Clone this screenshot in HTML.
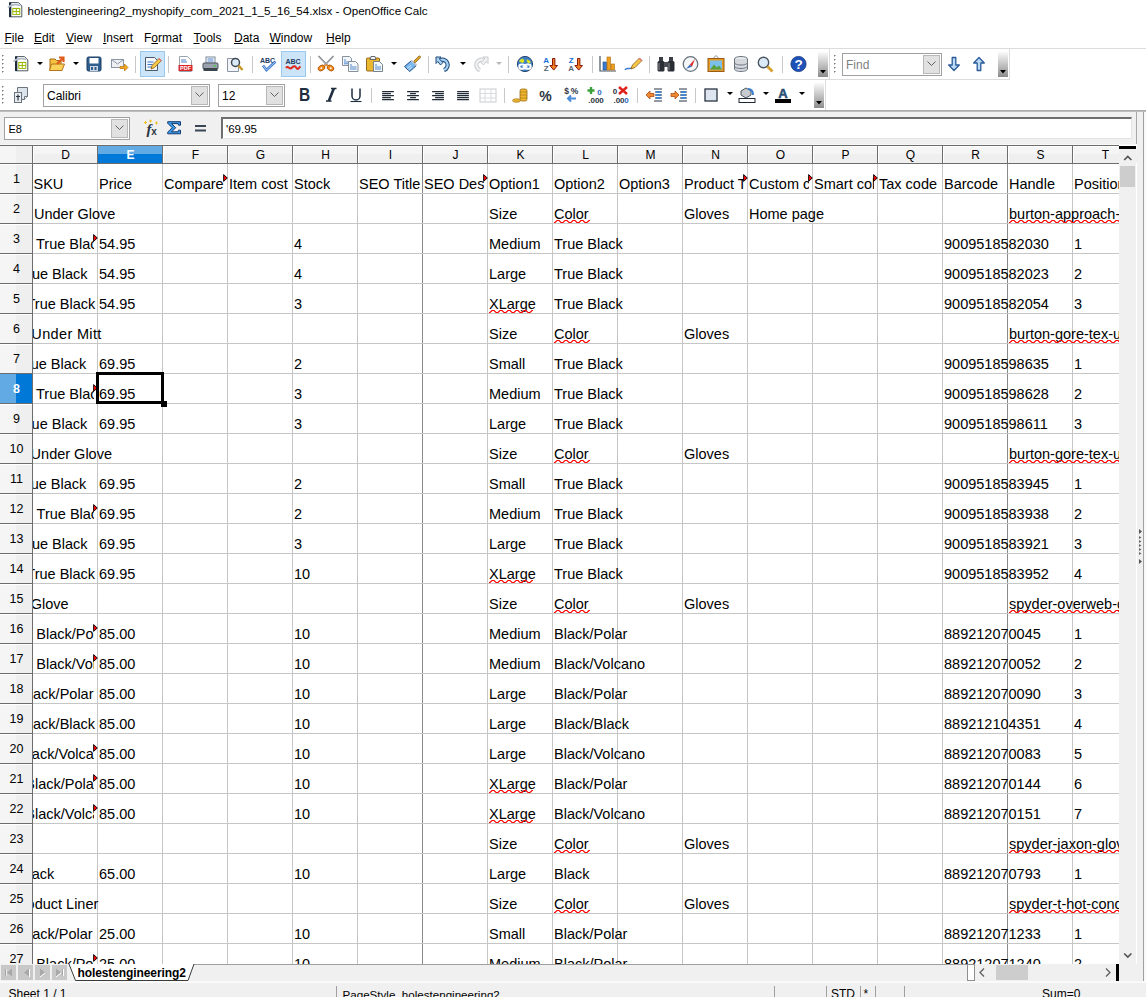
<!DOCTYPE html>
<html><head><meta charset="utf-8"><style>
html,body{margin:0;padding:0}
body{width:1146px;height:997px;overflow:hidden;position:relative;background:#fff;font-family:"Liberation Sans",sans-serif;color:#000}
.t{position:absolute;white-space:nowrap}
.r{position:absolute}
svg.r{overflow:visible}
u{text-decoration:underline;text-underline-offset:0.6px}
</style></head><body>
<svg class="r" style="left:8px;top:2px;" width="15" height="16" viewBox="0 0 15 16"><path d="M1.5 0.6H10.5L13.8 3.9V14.8H1.5Z" fill="#fff" stroke="#3c4650" stroke-width="0.9"/><rect x="1" y="0.5" width="2.3" height="14.5" fill="#1c2c3c"/><rect x="4.3" y="5.9" width="8" height="7" fill="#9ab800"/><path d="M5.3 6.9h2.5v2.2H5.3zM8.8 6.9h2.5v2.2H8.8zM5.3 10h2.5v2H5.3zM8.8 10h2.5v2H8.8z" fill="#fff"/><path d="M0 5.5C3 2.5 7.5 2 12.5 3.5" stroke="#b4bec8" stroke-width="1.7" fill="none"/></svg>
<div class="t " style="left:27.5px;top:5.18px;font-size:11.6px;line-height:11.6px;">holestengineering2_myshopify_com_2021_1_5_16_54.xlsx - OpenOffice Calc</div>
<div class="t " style="left:4.5px;top:31.84px;font-size:12px;line-height:12px;"><u>F</u>ile</div>
<div class="t " style="left:34px;top:31.84px;font-size:12px;line-height:12px;"><u>E</u>dit</div>
<div class="t " style="left:66px;top:31.84px;font-size:12px;line-height:12px;"><u>V</u>iew</div>
<div class="t " style="left:103px;top:31.84px;font-size:12px;line-height:12px;"><u>I</u>nsert</div>
<div class="t " style="left:144px;top:31.84px;font-size:12px;line-height:12px;">F<u>o</u>rmat</div>
<div class="t " style="left:193.5px;top:31.84px;font-size:12px;line-height:12px;"><u>T</u>ools</div>
<div class="t " style="left:234px;top:31.84px;font-size:12px;line-height:12px;"><u>D</u>ata</div>
<div class="t " style="left:269.5px;top:31.84px;font-size:12px;line-height:12px;"><u>W</u>indow</div>
<div class="t " style="left:326px;top:31.84px;font-size:12px;line-height:12px;"><u>H</u>elp</div>
<div class="r" style="left:0px;top:48px;width:1146px;height:1px;background:#dcdcdc"></div>
<div class="r" style="left:2px;top:55px;width:2px;height:2px;background:#7a7a7a;clip-path:polygon(0 0,100% 0,0 100%)"></div>
<div class="r" style="left:2px;top:59px;width:2px;height:2px;background:#7a7a7a;clip-path:polygon(0 0,100% 0,0 100%)"></div>
<div class="r" style="left:2px;top:63px;width:2px;height:2px;background:#7a7a7a;clip-path:polygon(0 0,100% 0,0 100%)"></div>
<div class="r" style="left:2px;top:67px;width:2px;height:2px;background:#7a7a7a;clip-path:polygon(0 0,100% 0,0 100%)"></div>
<div class="r" style="left:2px;top:71px;width:2px;height:2px;background:#7a7a7a;clip-path:polygon(0 0,100% 0,0 100%)"></div>
<svg class="r" style="left:13px;top:56px;" width="16" height="16" viewBox="0 0 16 16"><path d="M2.5 0.6H11.5L14.8 3.9V14.8H2.5Z" fill="#fff" stroke="#3c4650" stroke-width="0.9"/><rect x="2" y="0.5" width="2.3" height="14.5" fill="#1c2c3c"/><rect x="5.3" y="5.9" width="8" height="7" fill="#9ab800"/><path d="M6.3 6.9h2.5v2.2H6.3zM9.8 6.9h2.5v2.2H9.8zM6.3 10h2.5v2H6.3zM9.8 10h2.5v2H9.8z" fill="#fff"/><path d="M0.5 5.5C3.5 2.5 8.5 2 13.5 3.5" stroke="#b4bec8" stroke-width="1.7" fill="none"/></svg>
<svg class="r" style="left:37px;top:62px;" width="6" height="4" viewBox="0 0 6 4"><path d="M0 0h6L3 3z" fill="#000"/></svg>
<svg class="r" style="left:49px;top:56px;" width="17" height="16" viewBox="0 0 17 16"><path d="M1 3h5l1.5 1.5H12V14H1z" fill="#f5c342" stroke="#a86a10" stroke-width="1"/><path d="M2.5 8h13L13 14.5H0.5z" fill="#fbd25a" stroke="#b5731a" stroke-width="1"/><path d="M8 8l6-6M10 1.5h4.5V6" stroke="#e05a1c" stroke-width="2.2" fill="none"/></svg>
<svg class="r" style="left:73px;top:62px;" width="6" height="4" viewBox="0 0 6 4"><path d="M0 0h6L3 3z" fill="#000"/></svg>
<svg class="r" style="left:86px;top:56px;" width="16" height="16" viewBox="0 0 16 16"><rect x="1" y="1" width="14" height="14" rx="1.5" fill="#2f5f8f" stroke="#1b3f63"/><rect x="3.5" y="2" width="9" height="5.5" fill="#fff"/><rect x="4" y="10" width="8" height="5" fill="#cfd8e2"/><rect x="5" y="11" width="2" height="3" fill="#2f5f8f"/><rect x="8.5" y="11" width="2" height="3" fill="#2f5f8f"/></svg>
<svg class="r" style="left:111px;top:58px;" width="17" height="13" viewBox="0 0 17 13"><rect x="0.5" y="1.5" width="12" height="8" fill="#eef0f3" stroke="#8a96a4"/><path d="M0.5 1.5l6 4.5 6-4.5" stroke="#8a96a4" fill="none"/><path d="M9 8.5h4.5V6l3.5 3.5-3.5 3.5v-2.5H9z" fill="#f3a81e" stroke="#c07a10" stroke-width="0.8"/></svg>
<div class="r" style="left:135px;top:56px;width:1px;height:17px;background:#c8c8c8"></div>
<div class="r" style="left:140px;top:51px;width:25px;height:26px;background:#cce4f7;box-sizing:border-box;border:1px solid #99c9ef"></div>
<svg class="r" style="left:144px;top:56px;" width="17" height="16" viewBox="0 0 17 16"><path d="M1.5 1.5h9l3 3v10h-12z" fill="#f3f6fa" stroke="#4a5a6a"/><path d="M3.5 6h6M3.5 8.5h5M3.5 11h4" stroke="#3a76c4" stroke-width="1"/><path d="M7 13l1-3.5 7-7 2.3 2.3-7 7z" fill="#f5c84a" stroke="#8a5a10" stroke-width="0.8"/><path d="M14.5 2.8l2.3 2.3 0.8-0.8-2.3-2.3z" fill="#e86a8a"/></svg>
<div class="r" style="left:168px;top:56px;width:1px;height:17px;background:#c8c8c8"></div>
<svg class="r" style="left:178px;top:56px;" width="15" height="16" viewBox="0 0 15 16"><path d="M1.5 0.5h8l4 4v11h-12z" fill="#fff" stroke="#9aa4ae"/><path d="M3 4h5M3 6h6" stroke="#4a80c8"/><rect x="0.5" y="9" width="14" height="6" fill="#d8262a"/><text x="7.5" y="14.2" font-size="5.5" font-family="Liberation Sans" font-weight="bold" fill="#fff" text-anchor="middle">PDF</text></svg>
<svg class="r" style="left:202px;top:56px;" width="17" height="16" viewBox="0 0 17 16"><rect x="4" y="1" width="9" height="6" fill="#fff" stroke="#7a8694"/><path d="M5.5 3h6M5.5 5h6" stroke="#4a80c8"/><rect x="1" y="7" width="15" height="6" rx="1" fill="#9aa3ad" stroke="#4c5560"/><rect x="1.5" y="12" width="14" height="3" fill="#3c444c"/><rect x="12" y="9" width="2" height="1.5" fill="#4ec24e"/></svg>
<svg class="r" style="left:226px;top:56px;" width="17" height="16" viewBox="0 0 17 16"><path d="M1.5 2.5h8l3 3v10h-11z" fill="#f2f4f7" stroke="#8a96a4"/><circle cx="9.5" cy="6.5" r="4" fill="#dbe9f7" stroke="#3c4652" stroke-width="1.5"/><path d="M12.5 9.5l4 4.5" stroke="#c8962a" stroke-width="2.5"/></svg>
<div class="r" style="left:252px;top:56px;width:1px;height:17px;background:#c8c8c8"></div>
<svg class="r" style="left:259px;top:56px;" width="18" height="16" viewBox="0 0 18 16"><text x="8.5" y="6.5" font-size="7" font-family="Liberation Sans" font-weight="bold" fill="#1e3c64" text-anchor="middle">ABC</text><path d="M4 9.5l3.5 4.5 9-8.5" stroke="#3a7ad0" stroke-width="2.6" fill="none"/><path d="M4 9.5l3.5 4.5 9-8.5" stroke="#bcd6f2" stroke-width="0.9" fill="none"/></svg>
<div class="r" style="left:281px;top:51px;width:25px;height:26px;background:#cce4f7;box-sizing:border-box;border:1px solid #99c9ef"></div>
<svg class="r" style="left:284px;top:56px;" width="18" height="16" viewBox="0 0 18 16"><text x="9" y="8" font-size="7" font-family="Liberation Sans" font-weight="bold" fill="#1e3c64" text-anchor="middle">ABC</text><path d="M2 12c2-3 3.5 2 5.5 0s3.5-2.5 5 0 3-1 4-1.5" stroke="#e0261a" stroke-width="2" fill="none"/></svg>
<div class="r" style="left:310px;top:56px;width:1px;height:17px;background:#c8c8c8"></div>
<svg class="r" style="left:317px;top:55px;" width="18" height="17" viewBox="0 0 18 17"><path d="M1.5 1l9 9.5M16.5 1l-9 9.5" stroke="#6a7078" stroke-width="1.5"/><path d="M1.5 1l9 9.5M16.5 1l-9 9.5" stroke="#e0e4e8" stroke-width="0.5"/><ellipse cx="4.5" cy="13" rx="3.6" ry="2.6" transform="rotate(-30 4.5 13)" fill="#f08a1a" stroke="#a85008" stroke-width="0.8"/><ellipse cx="13.5" cy="13" rx="3.6" ry="2.6" transform="rotate(30 13.5 13)" fill="#f08a1a" stroke="#a85008" stroke-width="0.8"/><circle cx="4.3" cy="13.2" r="0.9" fill="#fff"/><circle cx="13.7" cy="13.2" r="0.9" fill="#fff"/><path d="M7.5 10.5l3 -0.5" stroke="#f08a1a" stroke-width="1.5"/></svg>
<svg class="r" style="left:342px;top:56px;" width="17" height="16" viewBox="0 0 17 16"><path d="M0.5 0.5h7l2 2v7h-9z" fill="#f4f7fa" stroke="#7a8490" stroke-width="0.9"/><path d="M2 4h2M2 6h5.5M2 7.8h5.5" stroke="#2a70c0" stroke-width="0.8"/><path d="M6.5 5.5h7l2.5 2.5v7.5h-9.5z" fill="#f4f7fa" stroke="#7a8490" stroke-width="0.9"/><path d="M8 9h2M8 11h6.5M8 13h6.5" stroke="#2a70c0" stroke-width="0.8"/></svg>
<svg class="r" style="left:366px;top:55px;" width="18" height="17" viewBox="0 0 18 17"><rect x="0.5" y="3" width="13" height="13" rx="1" fill="#eab830" stroke="#8a5a10" stroke-width="0.9"/><path d="M4 4.5l1-3h4l1 3z" fill="#f4f4f4" stroke="#505860" stroke-width="0.9"/><path d="M7.5 6.5h6l3 3v7h-9z" fill="#f4f7fa" stroke="#6a7684" stroke-width="0.9"/><path d="M9 10h2M9 12h6M9 14h6" stroke="#2a70c0" stroke-width="0.8"/></svg>
<svg class="r" style="left:391px;top:62px;" width="6" height="4" viewBox="0 0 6 4"><path d="M0 0h6L3 3z" fill="#000"/></svg>
<svg class="r" style="left:403px;top:55px;" width="18" height="17" viewBox="0 0 18 17"><path d="M1.5 11.5L8 6l5 4.8-6.3 5.7z" fill="#7ab8f0" stroke="#1e4a8a" stroke-width="1" stroke-linejoin="round"/><path d="M4 13.5l4-3.3M5.5 15l3.5-3" stroke="#d8ecfc" stroke-width="0.8"/><path d="M8.3 5.2l5.5 5" stroke="#f4f4f4" stroke-width="2.2"/><path d="M8.3 5.2l5.5 5" stroke="#3a4a5a" stroke-width="0.5" stroke-dasharray="0"/><path d="M12 6.5l4.5-4.5" stroke="#8a5a10" stroke-width="2.6" stroke-linecap="round"/><path d="M12 6.5l4.5-4.5" stroke="#e8b030" stroke-width="1.4" stroke-linecap="round"/></svg>
<div class="r" style="left:428px;top:56px;width:1px;height:17px;background:#c8c8c8"></div>
<svg class="r" style="left:435px;top:56px;" width="18" height="16" viewBox="0 0 18 16"><path d="M4.5 4.5A5.3 5.3 0 1 1 9 14" fill="none" stroke="#1e4a7a" stroke-width="4.2"/><path d="M4.5 4.5A5.3 5.3 0 1 1 9 14" fill="none" stroke="#a8d0f0" stroke-width="2.2"/><path d="M1 1H6L4.3 3 8 6.5 5.5 9 2.8 5.5 1 7.5z" fill="#a8d0f0" stroke="#1e4a7a" stroke-width="1" stroke-linejoin="round"/></svg>
<svg class="r" style="left:460px;top:62px;" width="6" height="4" viewBox="0 0 6 4"><path d="M0 0h6L3 3z" fill="#000"/></svg>
<svg class="r" style="left:471px;top:56px;" width="18" height="16" viewBox="0 0 18 16"><g transform="translate(18 0) scale(-1 1)"><path d="M4.5 4.5A5.3 5.3 0 1 1 9 14" fill="none" stroke="#c8cacc" stroke-width="4.2"/><path d="M4.5 4.5A5.3 5.3 0 1 1 9 14" fill="none" stroke="#f0f2f4" stroke-width="2.2"/><path d="M1 1H6L4.3 3 8 6.5 5.5 9 2.8 5.5 1 7.5z" fill="#f0f2f4" stroke="#c8cacc" stroke-width="1" stroke-linejoin="round"/></g></svg>
<svg class="r" style="left:496px;top:62px;" width="6" height="4" viewBox="0 0 6 4"><path d="M0 0h6L3 3z" fill="#b8b8b8"/></svg>
<div class="r" style="left:508px;top:56px;width:1px;height:17px;background:#c8c8c8"></div>
<svg class="r" style="left:516px;top:56px;" width="18" height="16" viewBox="0 0 18 16"><circle cx="9" cy="8" r="7.6" fill="#3d7fc4" stroke="#1a3560" stroke-width="0.9"/><path d="M3 5.5c1-2.5 3-3.2 4.5-2.5l1 2.5-2 1.5zM10.5 3.5c2 0 3.5 1 4.5 3l-2.5 1-1.5-1.5z" fill="#d8e020"/><rect x="3.3" y="8.6" width="5.6" height="4.2" rx="2.1" fill="none" stroke="#fff" stroke-width="2"/><rect x="9.1" y="8.6" width="5.6" height="4.2" rx="2.1" fill="none" stroke="#fff" stroke-width="2"/><path d="M6.5 10.7h5" stroke="#fff" stroke-width="1.5"/></svg>
<svg class="r" style="left:542px;top:55px;" width="16" height="17" viewBox="0 0 16 17"><text x="4.2" y="7.5" font-size="8" font-family="Liberation Sans" font-weight="bold" fill="#1a70d8" text-anchor="middle">A</text><text x="4.2" y="16" font-size="8" font-family="Liberation Sans" font-weight="bold" fill="#5a6470" text-anchor="middle">Z</text><path d="M10.5 3.5h2.4v7h2.6l-3.8 4.6-3.8-4.6h2.6z" fill="#f08020" stroke="#8a1a08" stroke-width="1" stroke-linejoin="round"/></svg>
<svg class="r" style="left:567px;top:55px;" width="16" height="17" viewBox="0 0 16 17"><text x="4.2" y="7.5" font-size="8" font-family="Liberation Sans" font-weight="bold" fill="#1a70d8" text-anchor="middle">Z</text><text x="4.2" y="16" font-size="8" font-family="Liberation Sans" font-weight="bold" fill="#5a6470" text-anchor="middle">A</text><path d="M10.5 3.5h2.4v7h2.6l-3.8 4.6-3.8-4.6h2.6z" fill="#f08020" stroke="#8a1a08" stroke-width="1" stroke-linejoin="round"/></svg>
<div class="r" style="left:592px;top:56px;width:1px;height:17px;background:#c8c8c8"></div>
<svg class="r" style="left:599px;top:55px;" width="18" height="17" viewBox="0 0 18 17"><path d="M1 1v15h16" fill="none" stroke="#4a5460" stroke-width="1.2"/><rect x="4" y="7" width="3.5" height="8" fill="#3a7ad0" stroke="#1e4a8a" stroke-width="0.6"/><rect x="8" y="2" width="3.5" height="13" fill="#f0a020" stroke="#a86a10" stroke-width="0.6"/><rect x="12" y="9" width="3.5" height="6" fill="#f0a020" stroke="#a86a10" stroke-width="0.6"/></svg>
<svg class="r" style="left:624px;top:56px;" width="18" height="16" viewBox="0 0 18 16"><path d="M1 14c2-4 5 1 7-3" stroke="#3a7ad0" stroke-width="1.5" fill="none"/><path d="M7 13l1.5-4 7-7 2.5 2.5-7 7z" fill="#f5c84a" stroke="#8a5a10" stroke-width="0.8"/><path d="M14.8 2.8l2.5 2.5 0.7-0.8-2.4-2.4z" fill="#e86a8a"/></svg>
<div class="r" style="left:649px;top:56px;width:1px;height:17px;background:#c8c8c8"></div>
<svg class="r" style="left:657px;top:56px;" width="18" height="16" viewBox="0 0 18 16"><rect x="2" y="1" width="4" height="5" fill="#3a3e44"/><rect x="12" y="1" width="4" height="5" fill="#3a3e44"/><rect x="0.5" y="5" width="7" height="10.5" rx="1.5" fill="#2a2e34"/><rect x="10.5" y="5" width="7" height="10.5" rx="1.5" fill="#2a2e34"/><rect x="7" y="6" width="4" height="5" fill="#4a4e54"/><path d="M2 7v7M12 7v7" stroke="#8a9098" stroke-width="1"/></svg>
<svg class="r" style="left:682px;top:56px;" width="17" height="16" viewBox="0 0 17 16"><circle cx="8.5" cy="8" r="7.3" fill="#f4f6f8" stroke="#6a747e" stroke-width="1.3"/><path d="M13 3L7.5 9 10 10.5z" fill="#e02a2a"/><path d="M4 13l3.5-4 2.5 1.5z" fill="#2a6ac4"/></svg>
<svg class="r" style="left:707px;top:55px;" width="18" height="17" viewBox="0 0 18 17"><path d="M6 3.5l3-3 3 3" fill="none" stroke="#6a7480" stroke-width="0.8"/><rect x="1" y="3.5" width="16" height="13" fill="#e49a2a" stroke="#9a5a10"/><rect x="3" y="5.5" width="12" height="9" fill="#7ac0e8"/><path d="M3 14.5l4-5 3 3 2-2 3 4z" fill="#5aa03a"/></svg>
<svg class="r" style="left:733px;top:56px;" width="16" height="16" viewBox="0 0 16 16"><ellipse cx="8" cy="3" rx="6.5" ry="2.5" fill="#e8ebee" stroke="#6a747e"/><path d="M1.5 3v10c0 1.5 3 2.5 6.5 2.5s6.5-1 6.5-2.5V3" fill="#d4d8dc" stroke="#6a747e"/><path d="M1.5 6.5c0 1.5 3 2.5 6.5 2.5s6.5-1 6.5-2.5M1.5 10c0 1.5 3 2.5 6.5 2.5s6.5-1 6.5-2.5" fill="none" stroke="#6a747e"/></svg>
<svg class="r" style="left:757px;top:56px;" width="17" height="16" viewBox="0 0 17 16"><circle cx="6.5" cy="6.5" r="5.2" fill="#dbeaf7" stroke="#4a5460" stroke-width="1.4"/><path d="M10.5 10.5l5 5" stroke="#d8a030" stroke-width="2.8"/></svg>
<div class="r" style="left:782px;top:56px;width:1px;height:17px;background:#c8c8c8"></div>
<svg class="r" style="left:790px;top:56px;" width="17" height="16" viewBox="0 0 17 16"><circle cx="8.5" cy="8" r="7.6" fill="#1f52b8" stroke="#12337a" stroke-width="0.8"/><text x="8.5" y="13" font-size="13.5" font-family="Liberation Sans" font-weight="bold" fill="#fff" text-anchor="middle">?</text></svg>
<div class="r" style="left:818px;top:52px;width:10px;height:25px;background:linear-gradient(#fafafa,#8c8c8c)"></div>
<svg class="r" style="left:820px;top:70px;" width="6" height="4" viewBox="0 0 6 4"><path d="M0 0h6L3 3.5z" fill="#000"/></svg>
<div class="r" style="left:829px;top:49px;width:1px;height:31px;background:#dcdcdc"></div>
<div class="r" style="left:0px;top:79px;width:830px;height:1px;background:#dcdcdc"></div>
<div class="r" style="left:834px;top:55px;width:2px;height:2px;background:#7a7a7a;clip-path:polygon(0 0,100% 0,0 100%)"></div>
<div class="r" style="left:834px;top:59px;width:2px;height:2px;background:#7a7a7a;clip-path:polygon(0 0,100% 0,0 100%)"></div>
<div class="r" style="left:834px;top:63px;width:2px;height:2px;background:#7a7a7a;clip-path:polygon(0 0,100% 0,0 100%)"></div>
<div class="r" style="left:834px;top:67px;width:2px;height:2px;background:#7a7a7a;clip-path:polygon(0 0,100% 0,0 100%)"></div>
<div class="r" style="left:834px;top:71px;width:2px;height:2px;background:#7a7a7a;clip-path:polygon(0 0,100% 0,0 100%)"></div>
<div class="r" style="left:842px;top:53px;width:100px;height:23px;box-sizing:border-box;border:1px solid #a0a0a0;background:#fff"></div>
<div class="r" style="left:923px;top:55px;width:17px;height:19px;box-sizing:border-box;border:1px solid #b8b8b8;background:#e1e1e1"></div>
<svg class="r" style="left:927px;top:61px;" width="9" height="6" viewBox="0 0 9 6"><path d="M0.5 0.5l4 4 4-4" fill="none" stroke="#606060" stroke-width="1"/></svg>
<div class="t " style="left:846px;top:59.34px;font-size:12px;line-height:12px;color:#808080">Find</div>
<svg class="r" style="left:947px;top:56px;" width="14" height="16" viewBox="0 0 14 16"><path d="M5.2 1.5h3.6v7.5h3.5L7 14.5 1.7 9h3.5z" fill="#bcdcf6" stroke="#2a5a9a" stroke-width="1.3" stroke-linejoin="round"/></svg>
<svg class="r" style="left:972px;top:56px;" width="14" height="16" viewBox="0 0 14 16"><path d="M5.2 14.5h3.6V7h3.5L7 1.5 1.7 7h3.5z" fill="#bcdcf6" stroke="#2a5a9a" stroke-width="1.3" stroke-linejoin="round"/></svg>
<div class="r" style="left:998px;top:52px;width:10px;height:25px;background:linear-gradient(#fafafa,#8c8c8c)"></div>
<svg class="r" style="left:1000px;top:70px;" width="6" height="4" viewBox="0 0 6 4"><path d="M0 0h6L3 3.5z" fill="#000"/></svg>
<div class="r" style="left:1009px;top:49px;width:1px;height:31px;background:#dcdcdc"></div>
<div class="r" style="left:830px;top:79px;width:180px;height:1px;background:#dcdcdc"></div>
<div class="r" style="left:2px;top:86px;width:2px;height:2px;background:#7a7a7a;clip-path:polygon(0 0,100% 0,0 100%)"></div>
<div class="r" style="left:2px;top:90px;width:2px;height:2px;background:#7a7a7a;clip-path:polygon(0 0,100% 0,0 100%)"></div>
<div class="r" style="left:2px;top:94px;width:2px;height:2px;background:#7a7a7a;clip-path:polygon(0 0,100% 0,0 100%)"></div>
<div class="r" style="left:2px;top:98px;width:2px;height:2px;background:#7a7a7a;clip-path:polygon(0 0,100% 0,0 100%)"></div>
<div class="r" style="left:2px;top:102px;width:2px;height:2px;background:#7a7a7a;clip-path:polygon(0 0,100% 0,0 100%)"></div>
<svg class="r" style="left:13px;top:86px;" width="18" height="17" viewBox="0 0 18 17"><path d="M4.5 1.5h10v9l-3 3h-7z" fill="#dde3ea" stroke="#6a747e"/><path d="M11.5 13.5v-3h3" fill="#fff" stroke="#6a747e"/><rect x="1.5" y="6.5" width="7" height="10" fill="#e8ecf0" stroke="#6a747e"/><path d="M5 8.5v6M3 10.5h4" stroke="#2a3440" stroke-width="1.2"/></svg>
<div class="r" style="left:43px;top:84px;width:167px;height:23px;box-sizing:border-box;border:1px solid #a0a0a0;background:#fff"></div>
<div class="r" style="left:191px;top:86px;width:17px;height:19px;box-sizing:border-box;border:1px solid #b8b8b8;background:#e1e1e1"></div>
<svg class="r" style="left:195px;top:92px;" width="9" height="6" viewBox="0 0 9 6"><path d="M0.5 0.5l4 4 4-4" fill="none" stroke="#606060" stroke-width="1"/></svg>
<div class="t " style="left:47px;top:89.84px;font-size:12px;line-height:12px;">Calibri</div>
<div class="r" style="left:218px;top:84px;width:67px;height:23px;box-sizing:border-box;border:1px solid #a0a0a0;background:#fff"></div>
<div class="r" style="left:266px;top:86px;width:17px;height:19px;box-sizing:border-box;border:1px solid #b8b8b8;background:#e1e1e1"></div>
<svg class="r" style="left:270px;top:92px;" width="9" height="6" viewBox="0 0 9 6"><path d="M0.5 0.5l4 4 4-4" fill="none" stroke="#606060" stroke-width="1"/></svg>
<div class="t " style="left:222px;top:89.84px;font-size:12px;line-height:12px;">12</div>
<svg class="r" style="left:299px;top:87px;" width="14" height="16" viewBox="0 0 14 16"><text x="0" y="14" font-size="18" font-family="Liberation Sans" font-weight="bold" fill="#1e2e3e" transform="scale(0.86 1)">B</text></svg>
<svg class="r" style="left:324px;top:87px;" width="13" height="16" viewBox="0 0 13 16"><path d="M7 1.5h5.5M2 14h5.5" stroke="#1e2e3e" stroke-width="1.4"/><path d="M9.8 1.5L4.8 14" stroke="#1e2e3e" stroke-width="2.6"/></svg>
<svg class="r" style="left:349px;top:87px;" width="14" height="16" viewBox="0 0 14 16"><path d="M3 1.5v7.5a4 4 0 0 0 8 0V1.5" fill="none" stroke="#1e2e3e" stroke-width="1.5"/><path d="M1.5 14.5h11" stroke="#1e2e3e" stroke-width="1.1"/></svg>
<div class="r" style="left:371px;top:88px;width:1px;height:15px;background:#c8c8c8"></div>
<svg class="r" style="left:382px;top:90px;" width="13" height="11" viewBox="0 0 13 11"><rect x="0" y="1.0" width="12" height="1.25" rx="0.5" fill="#232c36"/><rect x="0" y="3.0" width="9" height="1.25" rx="0.5" fill="#232c36"/><rect x="0" y="5.0" width="12" height="1.25" rx="0.5" fill="#232c36"/><rect x="0" y="7.0" width="9" height="1.25" rx="0.5" fill="#232c36"/><rect x="0" y="9.0" width="12" height="1.25" rx="0.5" fill="#232c36"/></svg>
<svg class="r" style="left:407px;top:90px;" width="13" height="11" viewBox="0 0 13 11"><rect x="0" y="1.0" width="12" height="1.25" rx="0.5" fill="#232c36"/><rect x="3" y="3.0" width="6" height="1.25" rx="0.5" fill="#232c36"/><rect x="0" y="5.0" width="12" height="1.25" rx="0.5" fill="#232c36"/><rect x="3" y="7.0" width="6" height="1.25" rx="0.5" fill="#232c36"/><rect x="0" y="9.0" width="12" height="1.25" rx="0.5" fill="#232c36"/></svg>
<svg class="r" style="left:432px;top:90px;" width="13" height="11" viewBox="0 0 13 11"><rect x="0" y="1.0" width="12" height="1.25" rx="0.5" fill="#232c36"/><rect x="3" y="3.0" width="9" height="1.25" rx="0.5" fill="#232c36"/><rect x="0" y="5.0" width="12" height="1.25" rx="0.5" fill="#232c36"/><rect x="3" y="7.0" width="9" height="1.25" rx="0.5" fill="#232c36"/><rect x="0" y="9.0" width="12" height="1.25" rx="0.5" fill="#232c36"/></svg>
<svg class="r" style="left:457px;top:90px;" width="13" height="11" viewBox="0 0 13 11"><rect x="0" y="1.0" width="12" height="1.25" rx="0.5" fill="#232c36"/><rect x="0" y="3.0" width="12" height="1.25" rx="0.5" fill="#232c36"/><rect x="0" y="5.0" width="12" height="1.25" rx="0.5" fill="#232c36"/><rect x="0" y="7.0" width="12" height="1.25" rx="0.5" fill="#232c36"/><rect x="0" y="9.0" width="12" height="1.25" rx="0.5" fill="#232c36"/></svg>
<svg class="r" style="left:479px;top:88px;" width="18" height="16" viewBox="0 0 18 16"><rect x="1" y="1" width="16" height="13" fill="#fff" stroke="#c8ccd0"/><path d="M1 5.5h16M1 10h16M6 1v13M12 1v13" stroke="#d8dcdf"/></svg>
<div class="r" style="left:504px;top:88px;width:1px;height:15px;background:#c8c8c8"></div>
<svg class="r" style="left:512px;top:86px;" width="18" height="17" viewBox="0 0 18 17"><ellipse cx="4.5" cy="14.5" rx="4" ry="1.8" fill="#e8b030" stroke="#9a6a10" stroke-width="0.6"/><rect x="8" y="3" width="7" height="12" rx="2" fill="#f0b830" stroke="#9a6a10" stroke-width="0.8"/><path d="M8 6h7M8 9h7M8 12h7" stroke="#9a6a10" stroke-width="0.6"/></svg>
<svg class="r" style="left:539px;top:88px;" width="13" height="14" viewBox="0 0 13 14"><text x="6.5" y="12.5" font-size="14" font-family="Liberation Sans" font-weight="bold" fill="#2a3440" text-anchor="middle">%</text></svg>
<svg class="r" style="left:562px;top:86px;" width="18" height="17" viewBox="0 0 18 17"><text x="4.5" y="8" font-size="8.5" font-family="Liberation Sans" font-weight="bold" fill="#2a3440" text-anchor="middle">$</text><text x="12.5" y="8" font-size="8.5" font-family="Liberation Sans" font-weight="bold" fill="#2a3440" text-anchor="middle">%</text><path d="M14 12.5H6M9 9.5l-3 3 3 3" fill="none" stroke="#4a8ad8" stroke-width="2"/></svg>
<svg class="r" style="left:587px;top:86px;" width="18" height="17" viewBox="0 0 18 17"><path d="M4 1v7M0.5 4.5h7" stroke="#3aa03a" stroke-width="2.4"/><text x="12.5" y="9" font-size="8" font-family="Liberation Sans" font-weight="bold" fill="#2a6ac4" text-anchor="middle">0</text><text x="9" y="16.5" font-size="8" font-family="Liberation Sans" font-weight="bold" fill="#2a3440" text-anchor="middle">.000</text></svg>
<svg class="r" style="left:612px;top:86px;" width="18" height="17" viewBox="0 0 18 17"><text x="3" y="8" font-size="8" font-family="Liberation Sans" font-weight="bold" fill="#2a3440" text-anchor="middle">0</text><path d="M7 1l8 7M15 1l-8 7" stroke="#e0201a" stroke-width="2.4"/><text x="7" y="16.5" font-size="8" font-family="Liberation Sans" font-weight="bold" fill="#2a3440" text-anchor="middle">.00</text><text x="14.5" y="16.5" font-size="8" font-family="Liberation Sans" font-weight="bold" fill="#2a6ac4" text-anchor="middle">0</text></svg>
<div class="r" style="left:637px;top:88px;width:1px;height:15px;background:#c8c8c8"></div>
<svg class="r" style="left:645px;top:87px;" width="18" height="16" viewBox="0 0 18 16"><path d="M9 2h8M9 14h8M10 5h7M10 8h7M10 11h7" stroke="#2a3440" stroke-width="1"/><path d="M11 5h5M11 8h5M11 11h5" stroke="#2a80d8" stroke-width="1.6"/><path d="M1 8l4-4v2.5h4v3H5V12z" fill="#f08a30" stroke="#b04a10" stroke-width="0.8"/></svg>
<svg class="r" style="left:670px;top:87px;" width="18" height="16" viewBox="0 0 18 16"><path d="M9 2h8M9 14h8M10 5h7M10 8h7M10 11h7" stroke="#2a3440" stroke-width="1"/><path d="M11 5h5M11 8h5M11 11h5" stroke="#2a80d8" stroke-width="1.6"/><path d="M9 8L5 4v2.5H1v3h4V12z" fill="#f08a30" stroke="#b04a10" stroke-width="0.8"/></svg>
<div class="r" style="left:695px;top:88px;width:1px;height:15px;background:#c8c8c8"></div>
<svg class="r" style="left:704px;top:88px;" width="14" height="14" viewBox="0 0 14 14"><rect x="1" y="1" width="12" height="12" fill="#dde6f0" stroke="#2a3440" stroke-width="1.3"/></svg>
<svg class="r" style="left:727px;top:92px;" width="6" height="4" viewBox="0 0 6 4"><path d="M0 0h6L3 3z" fill="#000"/></svg>
<svg class="r" style="left:738px;top:86px;" width="18" height="17" viewBox="0 0 18 17"><path d="M3 5l5-3 5 3v4l-5 3-5-3z" fill="#c8ccd0" stroke="#4a5460"/><path d="M10 3c3 0 5 2 5 6" stroke="#3a80d0" stroke-width="2" fill="none"/><rect x="1" y="12.5" width="16" height="4" fill="#fff" stroke="#1e2a36"/></svg>
<svg class="r" style="left:763px;top:92px;" width="6" height="4" viewBox="0 0 6 4"><path d="M0 0h6L3 3z" fill="#000"/></svg>
<svg class="r" style="left:774px;top:86px;" width="18" height="17" viewBox="0 0 18 17"><text x="9" y="12" font-size="13" font-family="Liberation Sans" font-weight="bold" fill="#2a5a8a" stroke="#1e3a5a" stroke-width="0.5" text-anchor="middle">A</text><rect x="1" y="13" width="16" height="4" fill="#000"/></svg>
<svg class="r" style="left:799px;top:92px;" width="6" height="4" viewBox="0 0 6 4"><path d="M0 0h6L3 3z" fill="#000"/></svg>
<div class="r" style="left:814px;top:83px;width:10px;height:25px;background:linear-gradient(#fafafa,#8c8c8c)"></div>
<svg class="r" style="left:816px;top:101px;" width="6" height="4" viewBox="0 0 6 4"><path d="M0 0h6L3 3.5z" fill="#000"/></svg>
<div class="r" style="left:825px;top:80px;width:1px;height:30px;background:#dcdcdc"></div>
<div class="r" style="left:0px;top:110px;width:1146px;height:2px;background:linear-gradient(#a0a0a0,#c8c8c8)"></div>
<div class="r" style="left:0px;top:112px;width:1137px;height:32px;background:#f0f0f0"></div>
<div class="r" style="left:1136px;top:112px;width:1px;height:33px;background:#a8a8a8"></div>
<div class="r" style="left:4px;top:117px;width:126px;height:23px;box-sizing:border-box;border:1px solid #a0a0a0;background:#fff"></div>
<div class="r" style="left:111px;top:119px;width:17px;height:19px;box-sizing:border-box;border:1px solid #b8b8b8;background:#e1e1e1"></div>
<svg class="r" style="left:115px;top:125px;" width="9" height="6" viewBox="0 0 9 6"><path d="M0.5 0.5l4 4 4-4" fill="none" stroke="#606060" stroke-width="1"/></svg>
<div class="t " style="left:8.5px;top:124.19px;font-size:11px;line-height:11px;">E8</div>
<svg class="r" style="left:141px;top:119px;" width="18" height="17" viewBox="0 0 18 17"><text x="8" y="15" font-size="15" font-family="Liberation Serif" font-style="italic" font-weight="bold" fill="#2a3440" text-anchor="middle">f</text><text x="13" y="15.5" font-size="10" font-family="Liberation Sans" font-weight="bold" fill="#2a3440" text-anchor="middle">x</text><path d="M3 3.5h3M4.5 2v3M8 2h3M9.5 0.5v3M14 4h3M15.5 2.5v3" stroke="#f0c020" stroke-width="1"/></svg>
<svg class="r" style="left:167px;top:121px;" width="15" height="14" viewBox="0 0 15 14"><path d="M0.7 0.7H13.5V4.2H11.6L11 2.6H4.6L8.7 6.7 4.6 10.8H11L11.6 9.2H13.5V12.8H0.7V11.2L5.2 6.7 0.7 2.2Z" fill="#3a9ae8" stroke="#143a6e" stroke-width="1"/></svg>
<svg class="r" style="left:195px;top:125px;" width="12" height="7" viewBox="0 0 12 7"><rect x="0" y="0" width="11" height="2" fill="#3a4654"/><rect x="0" y="4.5" width="11" height="2" fill="#3a4654"/></svg>
<div class="r" style="left:221px;top:117px;width:911px;height:22px;box-sizing:border-box;background:#fff;border-top:2px solid #6e6e6e;border-left:2px solid #6e6e6e;border-right:1px solid #e3e3e3;border-bottom:1px solid #e3e3e3"></div>
<div class="t " style="left:226px;top:124.07px;font-size:11.5px;line-height:11.5px;">'69.95</div>
<div class="r" style="left:1137px;top:112px;width:9px;height:885px;background:#f0f0f0"></div>
<div class="r" style="left:1143px;top:112px;width:1px;height:870px;background:#a0a0a0"></div>
<div class="r" style="left:1144px;top:112px;width:2px;height:870px;background:#f8f8f8"></div>
<div class="r" style="left:1137px;top:981px;width:9px;height:1px;background:#a0a0a0"></div>
<svg class="r" style="left:1138px;top:528px;" width="5" height="36" viewBox="0 0 5 36"><path d="M1 1l3 2.5-3 2.5z" fill="#555"/><path d="M1 8l2.5 1.5L1 11zM1 12l2.5 1.5L1 15zM1 16l2.5 1.5L1 19zM1 20l2.5 1.5L1 23zM1 24l2.5 1.5L1 27z" fill="#666"/><path d="M1 31l3 2.5-3 2.5z" fill="#555"/></svg>
<div class="r" style="left:0px;top:144px;width:1137px;height:1px;background:#f8f8f8"></div>
<div class="r" style="left:0px;top:145px;width:1119px;height:1px;background:#6d6d6d"></div>
<div class="r" style="left:0px;top:146px;width:32px;height:17px;background:linear-gradient(90deg,#f5f5f5 0,#f5f5f5 16px,#efefef 16px)"></div>
<div class="r" style="left:33px;top:146px;width:64px;height:17px;background:linear-gradient(#f5f5f5 0,#f5f5f5 8px,#efefef 8px);box-shadow:inset 1px 1px 0 #fff"></div>
<div class="r" style="left:32px;top:146px;width:1px;height:18px;background:#6d6d6d"></div>
<div class="t" style="left:33.5px;width:64px;text-align:center;top:149.44px;font-size:12px;line-height:12px;color:#000;">D</div>
<div class="r" style="left:98px;top:146px;width:65px;height:17px;background:linear-gradient(#61aae4 0,#61aae4 8px,#0078d7 8px)"></div>
<div class="r" style="left:97px;top:146px;width:1px;height:18px;background:#6d6d6d"></div>
<div class="t" style="left:98.5px;width:64px;text-align:center;top:149.44px;font-size:12px;line-height:12px;color:#fff;font-weight:bold">E</div>
<div class="r" style="left:163px;top:146px;width:64px;height:17px;background:linear-gradient(#f5f5f5 0,#f5f5f5 8px,#efefef 8px);box-shadow:inset 1px 1px 0 #fff"></div>
<div class="r" style="left:162px;top:146px;width:1px;height:18px;background:#6d6d6d"></div>
<div class="t" style="left:163.5px;width:64px;text-align:center;top:149.44px;font-size:12px;line-height:12px;color:#000;">F</div>
<div class="r" style="left:228px;top:146px;width:64px;height:17px;background:linear-gradient(#f5f5f5 0,#f5f5f5 8px,#efefef 8px);box-shadow:inset 1px 1px 0 #fff"></div>
<div class="r" style="left:227px;top:146px;width:1px;height:18px;background:#6d6d6d"></div>
<div class="t" style="left:228.5px;width:64px;text-align:center;top:149.44px;font-size:12px;line-height:12px;color:#000;">G</div>
<div class="r" style="left:293px;top:146px;width:64px;height:17px;background:linear-gradient(#f5f5f5 0,#f5f5f5 8px,#efefef 8px);box-shadow:inset 1px 1px 0 #fff"></div>
<div class="r" style="left:292px;top:146px;width:1px;height:18px;background:#6d6d6d"></div>
<div class="t" style="left:293.5px;width:64px;text-align:center;top:149.44px;font-size:12px;line-height:12px;color:#000;">H</div>
<div class="r" style="left:358px;top:146px;width:64px;height:17px;background:linear-gradient(#f5f5f5 0,#f5f5f5 8px,#efefef 8px);box-shadow:inset 1px 1px 0 #fff"></div>
<div class="r" style="left:357px;top:146px;width:1px;height:18px;background:#6d6d6d"></div>
<div class="t" style="left:358.5px;width:64px;text-align:center;top:149.44px;font-size:12px;line-height:12px;color:#000;">I</div>
<div class="r" style="left:423px;top:146px;width:64px;height:17px;background:linear-gradient(#f5f5f5 0,#f5f5f5 8px,#efefef 8px);box-shadow:inset 1px 1px 0 #fff"></div>
<div class="r" style="left:422px;top:146px;width:1px;height:18px;background:#6d6d6d"></div>
<div class="t" style="left:423.5px;width:64px;text-align:center;top:149.44px;font-size:12px;line-height:12px;color:#000;">J</div>
<div class="r" style="left:488px;top:146px;width:64px;height:17px;background:linear-gradient(#f5f5f5 0,#f5f5f5 8px,#efefef 8px);box-shadow:inset 1px 1px 0 #fff"></div>
<div class="r" style="left:487px;top:146px;width:1px;height:18px;background:#6d6d6d"></div>
<div class="t" style="left:488.5px;width:64px;text-align:center;top:149.44px;font-size:12px;line-height:12px;color:#000;">K</div>
<div class="r" style="left:553px;top:146px;width:64px;height:17px;background:linear-gradient(#f5f5f5 0,#f5f5f5 8px,#efefef 8px);box-shadow:inset 1px 1px 0 #fff"></div>
<div class="r" style="left:552px;top:146px;width:1px;height:18px;background:#6d6d6d"></div>
<div class="t" style="left:553.5px;width:64px;text-align:center;top:149.44px;font-size:12px;line-height:12px;color:#000;">L</div>
<div class="r" style="left:618px;top:146px;width:64px;height:17px;background:linear-gradient(#f5f5f5 0,#f5f5f5 8px,#efefef 8px);box-shadow:inset 1px 1px 0 #fff"></div>
<div class="r" style="left:617px;top:146px;width:1px;height:18px;background:#6d6d6d"></div>
<div class="t" style="left:618.5px;width:64px;text-align:center;top:149.44px;font-size:12px;line-height:12px;color:#000;">M</div>
<div class="r" style="left:683px;top:146px;width:64px;height:17px;background:linear-gradient(#f5f5f5 0,#f5f5f5 8px,#efefef 8px);box-shadow:inset 1px 1px 0 #fff"></div>
<div class="r" style="left:682px;top:146px;width:1px;height:18px;background:#6d6d6d"></div>
<div class="t" style="left:683.5px;width:64px;text-align:center;top:149.44px;font-size:12px;line-height:12px;color:#000;">N</div>
<div class="r" style="left:748px;top:146px;width:64px;height:17px;background:linear-gradient(#f5f5f5 0,#f5f5f5 8px,#efefef 8px);box-shadow:inset 1px 1px 0 #fff"></div>
<div class="r" style="left:747px;top:146px;width:1px;height:18px;background:#6d6d6d"></div>
<div class="t" style="left:748.5px;width:64px;text-align:center;top:149.44px;font-size:12px;line-height:12px;color:#000;">O</div>
<div class="r" style="left:813px;top:146px;width:64px;height:17px;background:linear-gradient(#f5f5f5 0,#f5f5f5 8px,#efefef 8px);box-shadow:inset 1px 1px 0 #fff"></div>
<div class="r" style="left:812px;top:146px;width:1px;height:18px;background:#6d6d6d"></div>
<div class="t" style="left:813.5px;width:64px;text-align:center;top:149.44px;font-size:12px;line-height:12px;color:#000;">P</div>
<div class="r" style="left:878px;top:146px;width:64px;height:17px;background:linear-gradient(#f5f5f5 0,#f5f5f5 8px,#efefef 8px);box-shadow:inset 1px 1px 0 #fff"></div>
<div class="r" style="left:877px;top:146px;width:1px;height:18px;background:#6d6d6d"></div>
<div class="t" style="left:878.5px;width:64px;text-align:center;top:149.44px;font-size:12px;line-height:12px;color:#000;">Q</div>
<div class="r" style="left:943px;top:146px;width:64px;height:17px;background:linear-gradient(#f5f5f5 0,#f5f5f5 8px,#efefef 8px);box-shadow:inset 1px 1px 0 #fff"></div>
<div class="r" style="left:942px;top:146px;width:1px;height:18px;background:#6d6d6d"></div>
<div class="t" style="left:943.5px;width:64px;text-align:center;top:149.44px;font-size:12px;line-height:12px;color:#000;">R</div>
<div class="r" style="left:1008px;top:146px;width:64px;height:17px;background:linear-gradient(#f5f5f5 0,#f5f5f5 8px,#efefef 8px);box-shadow:inset 1px 1px 0 #fff"></div>
<div class="r" style="left:1007px;top:146px;width:1px;height:18px;background:#6d6d6d"></div>
<div class="t" style="left:1008.5px;width:64px;text-align:center;top:149.44px;font-size:12px;line-height:12px;color:#000;">S</div>
<div class="r" style="left:1073px;top:146px;width:64px;height:17px;background:linear-gradient(#f5f5f5 0,#f5f5f5 8px,#efefef 8px);box-shadow:inset 1px 1px 0 #fff"></div>
<div class="r" style="left:1072px;top:146px;width:1px;height:18px;background:#6d6d6d"></div>
<div class="t" style="left:1073.5px;width:64px;text-align:center;top:149.44px;font-size:12px;line-height:12px;color:#000;">T</div>
<div class="r" style="left:0px;top:163px;width:1119px;height:1px;background:#6d6d6d"></div>
<div class="r" style="left:1119px;top:146px;width:17px;height:3px;background:#000"></div>
<div class="r" style="left:0px;top:164px;width:32px;height:30px;background:linear-gradient(90deg,#f5f5f5 0,#f5f5f5 16px,#efefef 16px);box-shadow:inset 0 1px 0 #fff"></div>
<div class="t" style="left:0.5px;width:32px;text-align:center;top:164.5px;height:30px;font-size:12.5px;line-height:29px;color:#000;">1</div>
<div class="r" style="left:0px;top:194px;width:32px;height:30px;background:linear-gradient(90deg,#f5f5f5 0,#f5f5f5 16px,#efefef 16px);box-shadow:inset 0 1px 0 #fff"></div>
<div class="r" style="left:0px;top:193px;width:32px;height:1px;background:#6d6d6d"></div>
<div class="t" style="left:0.5px;width:32px;text-align:center;top:194.5px;height:30px;font-size:12.5px;line-height:29px;color:#000;">2</div>
<div class="r" style="left:0px;top:224px;width:32px;height:30px;background:linear-gradient(90deg,#f5f5f5 0,#f5f5f5 16px,#efefef 16px);box-shadow:inset 0 1px 0 #fff"></div>
<div class="r" style="left:0px;top:223px;width:32px;height:1px;background:#6d6d6d"></div>
<div class="t" style="left:0.5px;width:32px;text-align:center;top:224.5px;height:30px;font-size:12.5px;line-height:29px;color:#000;">3</div>
<div class="r" style="left:0px;top:254px;width:32px;height:30px;background:linear-gradient(90deg,#f5f5f5 0,#f5f5f5 16px,#efefef 16px);box-shadow:inset 0 1px 0 #fff"></div>
<div class="r" style="left:0px;top:253px;width:32px;height:1px;background:#6d6d6d"></div>
<div class="t" style="left:0.5px;width:32px;text-align:center;top:254.5px;height:30px;font-size:12.5px;line-height:29px;color:#000;">4</div>
<div class="r" style="left:0px;top:284px;width:32px;height:30px;background:linear-gradient(90deg,#f5f5f5 0,#f5f5f5 16px,#efefef 16px);box-shadow:inset 0 1px 0 #fff"></div>
<div class="r" style="left:0px;top:283px;width:32px;height:1px;background:#6d6d6d"></div>
<div class="t" style="left:0.5px;width:32px;text-align:center;top:284.5px;height:30px;font-size:12.5px;line-height:29px;color:#000;">5</div>
<div class="r" style="left:0px;top:314px;width:32px;height:30px;background:linear-gradient(90deg,#f5f5f5 0,#f5f5f5 16px,#efefef 16px);box-shadow:inset 0 1px 0 #fff"></div>
<div class="r" style="left:0px;top:313px;width:32px;height:1px;background:#6d6d6d"></div>
<div class="t" style="left:0.5px;width:32px;text-align:center;top:314.5px;height:30px;font-size:12.5px;line-height:29px;color:#000;">6</div>
<div class="r" style="left:0px;top:344px;width:32px;height:30px;background:linear-gradient(90deg,#f5f5f5 0,#f5f5f5 16px,#efefef 16px);box-shadow:inset 0 1px 0 #fff"></div>
<div class="r" style="left:0px;top:343px;width:32px;height:1px;background:#6d6d6d"></div>
<div class="t" style="left:0.5px;width:32px;text-align:center;top:344.5px;height:30px;font-size:12.5px;line-height:29px;color:#000;">7</div>
<div class="r" style="left:0px;top:374px;width:32px;height:30px;background:linear-gradient(90deg,#61aae4 0,#61aae4 16px,#0078d7 16px)"></div>
<div class="r" style="left:0px;top:373px;width:32px;height:1px;background:#6d6d6d"></div>
<div class="t" style="left:0.5px;width:32px;text-align:center;top:374.5px;height:30px;font-size:12.5px;line-height:29px;color:#fff;font-weight:bold">8</div>
<div class="r" style="left:0px;top:404px;width:32px;height:30px;background:linear-gradient(90deg,#f5f5f5 0,#f5f5f5 16px,#efefef 16px);box-shadow:inset 0 1px 0 #fff"></div>
<div class="r" style="left:0px;top:403px;width:32px;height:1px;background:#6d6d6d"></div>
<div class="t" style="left:0.5px;width:32px;text-align:center;top:404.5px;height:30px;font-size:12.5px;line-height:29px;color:#000;">9</div>
<div class="r" style="left:0px;top:434px;width:32px;height:30px;background:linear-gradient(90deg,#f5f5f5 0,#f5f5f5 16px,#efefef 16px);box-shadow:inset 0 1px 0 #fff"></div>
<div class="r" style="left:0px;top:433px;width:32px;height:1px;background:#6d6d6d"></div>
<div class="t" style="left:0.5px;width:32px;text-align:center;top:434.5px;height:30px;font-size:12.5px;line-height:29px;color:#000;">10</div>
<div class="r" style="left:0px;top:464px;width:32px;height:30px;background:linear-gradient(90deg,#f5f5f5 0,#f5f5f5 16px,#efefef 16px);box-shadow:inset 0 1px 0 #fff"></div>
<div class="r" style="left:0px;top:463px;width:32px;height:1px;background:#6d6d6d"></div>
<div class="t" style="left:0.5px;width:32px;text-align:center;top:464.5px;height:30px;font-size:12.5px;line-height:29px;color:#000;">11</div>
<div class="r" style="left:0px;top:494px;width:32px;height:30px;background:linear-gradient(90deg,#f5f5f5 0,#f5f5f5 16px,#efefef 16px);box-shadow:inset 0 1px 0 #fff"></div>
<div class="r" style="left:0px;top:493px;width:32px;height:1px;background:#6d6d6d"></div>
<div class="t" style="left:0.5px;width:32px;text-align:center;top:494.5px;height:30px;font-size:12.5px;line-height:29px;color:#000;">12</div>
<div class="r" style="left:0px;top:524px;width:32px;height:30px;background:linear-gradient(90deg,#f5f5f5 0,#f5f5f5 16px,#efefef 16px);box-shadow:inset 0 1px 0 #fff"></div>
<div class="r" style="left:0px;top:523px;width:32px;height:1px;background:#6d6d6d"></div>
<div class="t" style="left:0.5px;width:32px;text-align:center;top:524.5px;height:30px;font-size:12.5px;line-height:29px;color:#000;">13</div>
<div class="r" style="left:0px;top:554px;width:32px;height:30px;background:linear-gradient(90deg,#f5f5f5 0,#f5f5f5 16px,#efefef 16px);box-shadow:inset 0 1px 0 #fff"></div>
<div class="r" style="left:0px;top:553px;width:32px;height:1px;background:#6d6d6d"></div>
<div class="t" style="left:0.5px;width:32px;text-align:center;top:554.5px;height:30px;font-size:12.5px;line-height:29px;color:#000;">14</div>
<div class="r" style="left:0px;top:584px;width:32px;height:30px;background:linear-gradient(90deg,#f5f5f5 0,#f5f5f5 16px,#efefef 16px);box-shadow:inset 0 1px 0 #fff"></div>
<div class="r" style="left:0px;top:583px;width:32px;height:1px;background:#6d6d6d"></div>
<div class="t" style="left:0.5px;width:32px;text-align:center;top:584.5px;height:30px;font-size:12.5px;line-height:29px;color:#000;">15</div>
<div class="r" style="left:0px;top:614px;width:32px;height:30px;background:linear-gradient(90deg,#f5f5f5 0,#f5f5f5 16px,#efefef 16px);box-shadow:inset 0 1px 0 #fff"></div>
<div class="r" style="left:0px;top:613px;width:32px;height:1px;background:#6d6d6d"></div>
<div class="t" style="left:0.5px;width:32px;text-align:center;top:614.5px;height:30px;font-size:12.5px;line-height:29px;color:#000;">16</div>
<div class="r" style="left:0px;top:644px;width:32px;height:30px;background:linear-gradient(90deg,#f5f5f5 0,#f5f5f5 16px,#efefef 16px);box-shadow:inset 0 1px 0 #fff"></div>
<div class="r" style="left:0px;top:643px;width:32px;height:1px;background:#6d6d6d"></div>
<div class="t" style="left:0.5px;width:32px;text-align:center;top:644.5px;height:30px;font-size:12.5px;line-height:29px;color:#000;">17</div>
<div class="r" style="left:0px;top:674px;width:32px;height:30px;background:linear-gradient(90deg,#f5f5f5 0,#f5f5f5 16px,#efefef 16px);box-shadow:inset 0 1px 0 #fff"></div>
<div class="r" style="left:0px;top:673px;width:32px;height:1px;background:#6d6d6d"></div>
<div class="t" style="left:0.5px;width:32px;text-align:center;top:674.5px;height:30px;font-size:12.5px;line-height:29px;color:#000;">18</div>
<div class="r" style="left:0px;top:704px;width:32px;height:30px;background:linear-gradient(90deg,#f5f5f5 0,#f5f5f5 16px,#efefef 16px);box-shadow:inset 0 1px 0 #fff"></div>
<div class="r" style="left:0px;top:703px;width:32px;height:1px;background:#6d6d6d"></div>
<div class="t" style="left:0.5px;width:32px;text-align:center;top:704.5px;height:30px;font-size:12.5px;line-height:29px;color:#000;">19</div>
<div class="r" style="left:0px;top:734px;width:32px;height:30px;background:linear-gradient(90deg,#f5f5f5 0,#f5f5f5 16px,#efefef 16px);box-shadow:inset 0 1px 0 #fff"></div>
<div class="r" style="left:0px;top:733px;width:32px;height:1px;background:#6d6d6d"></div>
<div class="t" style="left:0.5px;width:32px;text-align:center;top:734.5px;height:30px;font-size:12.5px;line-height:29px;color:#000;">20</div>
<div class="r" style="left:0px;top:764px;width:32px;height:30px;background:linear-gradient(90deg,#f5f5f5 0,#f5f5f5 16px,#efefef 16px);box-shadow:inset 0 1px 0 #fff"></div>
<div class="r" style="left:0px;top:763px;width:32px;height:1px;background:#6d6d6d"></div>
<div class="t" style="left:0.5px;width:32px;text-align:center;top:764.5px;height:30px;font-size:12.5px;line-height:29px;color:#000;">21</div>
<div class="r" style="left:0px;top:794px;width:32px;height:30px;background:linear-gradient(90deg,#f5f5f5 0,#f5f5f5 16px,#efefef 16px);box-shadow:inset 0 1px 0 #fff"></div>
<div class="r" style="left:0px;top:793px;width:32px;height:1px;background:#6d6d6d"></div>
<div class="t" style="left:0.5px;width:32px;text-align:center;top:794.5px;height:30px;font-size:12.5px;line-height:29px;color:#000;">22</div>
<div class="r" style="left:0px;top:824px;width:32px;height:30px;background:linear-gradient(90deg,#f5f5f5 0,#f5f5f5 16px,#efefef 16px);box-shadow:inset 0 1px 0 #fff"></div>
<div class="r" style="left:0px;top:823px;width:32px;height:1px;background:#6d6d6d"></div>
<div class="t" style="left:0.5px;width:32px;text-align:center;top:824.5px;height:30px;font-size:12.5px;line-height:29px;color:#000;">23</div>
<div class="r" style="left:0px;top:854px;width:32px;height:30px;background:linear-gradient(90deg,#f5f5f5 0,#f5f5f5 16px,#efefef 16px);box-shadow:inset 0 1px 0 #fff"></div>
<div class="r" style="left:0px;top:853px;width:32px;height:1px;background:#6d6d6d"></div>
<div class="t" style="left:0.5px;width:32px;text-align:center;top:854.5px;height:30px;font-size:12.5px;line-height:29px;color:#000;">24</div>
<div class="r" style="left:0px;top:884px;width:32px;height:30px;background:linear-gradient(90deg,#f5f5f5 0,#f5f5f5 16px,#efefef 16px);box-shadow:inset 0 1px 0 #fff"></div>
<div class="r" style="left:0px;top:883px;width:32px;height:1px;background:#6d6d6d"></div>
<div class="t" style="left:0.5px;width:32px;text-align:center;top:884.5px;height:30px;font-size:12.5px;line-height:29px;color:#000;">25</div>
<div class="r" style="left:0px;top:914px;width:32px;height:30px;background:linear-gradient(90deg,#f5f5f5 0,#f5f5f5 16px,#efefef 16px);box-shadow:inset 0 1px 0 #fff"></div>
<div class="r" style="left:0px;top:913px;width:32px;height:1px;background:#6d6d6d"></div>
<div class="t" style="left:0.5px;width:32px;text-align:center;top:914.5px;height:30px;font-size:12.5px;line-height:29px;color:#000;">26</div>
<div class="r" style="left:0px;top:944px;width:32px;height:20px;background:linear-gradient(90deg,#f5f5f5 0,#f5f5f5 16px,#efefef 16px);box-shadow:inset 0 1px 0 #fff"></div>
<div class="r" style="left:0px;top:943px;width:32px;height:1px;background:#6d6d6d"></div>
<div class="t" style="left:0.5px;width:32px;text-align:center;top:944.5px;height:20px;font-size:12.5px;line-height:29px;color:#000;">27</div>
<div class="r" style="left:32px;top:164px;width:1px;height:800px;background:#6d6d6d"></div>
<div class="r" style="left:97px;top:164px;width:1px;height:800px;background:#c6c6c6"></div>
<div class="r" style="left:162px;top:164px;width:1px;height:800px;background:#c6c6c6"></div>
<div class="r" style="left:227px;top:164px;width:1px;height:800px;background:#c6c6c6"></div>
<div class="r" style="left:292px;top:164px;width:1px;height:800px;background:#c6c6c6"></div>
<div class="r" style="left:357px;top:164px;width:1px;height:800px;background:#c6c6c6"></div>
<div class="r" style="left:422px;top:164px;width:1px;height:800px;background:#8a8a8a"></div>
<div class="r" style="left:487px;top:164px;width:1px;height:800px;background:#c6c6c6"></div>
<div class="r" style="left:552px;top:164px;width:1px;height:800px;background:#c6c6c6"></div>
<div class="r" style="left:617px;top:164px;width:1px;height:800px;background:#c6c6c6"></div>
<div class="r" style="left:682px;top:164px;width:1px;height:800px;background:#c6c6c6"></div>
<div class="r" style="left:747px;top:164px;width:1px;height:800px;background:#c6c6c6"></div>
<div class="r" style="left:812px;top:164px;width:1px;height:800px;background:#c6c6c6"></div>
<div class="r" style="left:877px;top:164px;width:1px;height:800px;background:#c6c6c6"></div>
<div class="r" style="left:942px;top:164px;width:1px;height:800px;background:#c6c6c6"></div>
<div class="r" style="left:1007px;top:164px;width:1px;height:800px;background:#8a8a8a"></div>
<div class="r" style="left:1072px;top:164px;width:1px;height:800px;background:#c6c6c6"></div>
<div class="r" style="left:33px;top:193px;width:1086px;height:1px;background:#c6c6c6"></div>
<div class="r" style="left:33px;top:223px;width:1086px;height:1px;background:#c6c6c6"></div>
<div class="r" style="left:33px;top:253px;width:1086px;height:1px;background:#c6c6c6"></div>
<div class="r" style="left:33px;top:283px;width:1086px;height:1px;background:#c6c6c6"></div>
<div class="r" style="left:33px;top:313px;width:1086px;height:1px;background:#c6c6c6"></div>
<div class="r" style="left:33px;top:343px;width:1086px;height:1px;background:#c6c6c6"></div>
<div class="r" style="left:33px;top:373px;width:1086px;height:1px;background:#c6c6c6"></div>
<div class="r" style="left:33px;top:403px;width:1086px;height:1px;background:#c6c6c6"></div>
<div class="r" style="left:33px;top:433px;width:1086px;height:1px;background:#c6c6c6"></div>
<div class="r" style="left:33px;top:463px;width:1086px;height:1px;background:#c6c6c6"></div>
<div class="r" style="left:33px;top:493px;width:1086px;height:1px;background:#c6c6c6"></div>
<div class="r" style="left:33px;top:523px;width:1086px;height:1px;background:#c6c6c6"></div>
<div class="r" style="left:33px;top:553px;width:1086px;height:1px;background:#c6c6c6"></div>
<div class="r" style="left:33px;top:583px;width:1086px;height:1px;background:#c6c6c6"></div>
<div class="r" style="left:33px;top:613px;width:1086px;height:1px;background:#c6c6c6"></div>
<div class="r" style="left:33px;top:643px;width:1086px;height:1px;background:#c6c6c6"></div>
<div class="r" style="left:33px;top:673px;width:1086px;height:1px;background:#c6c6c6"></div>
<div class="r" style="left:33px;top:703px;width:1086px;height:1px;background:#c6c6c6"></div>
<div class="r" style="left:33px;top:733px;width:1086px;height:1px;background:#c6c6c6"></div>
<div class="r" style="left:33px;top:763px;width:1086px;height:1px;background:#c6c6c6"></div>
<div class="r" style="left:33px;top:793px;width:1086px;height:1px;background:#c6c6c6"></div>
<div class="r" style="left:33px;top:823px;width:1086px;height:1px;background:#c6c6c6"></div>
<div class="r" style="left:33px;top:853px;width:1086px;height:1px;background:#c6c6c6"></div>
<div class="r" style="left:33px;top:883px;width:1086px;height:1px;background:#c6c6c6"></div>
<div class="r" style="left:33px;top:913px;width:1086px;height:1px;background:#c6c6c6"></div>
<div class="r" style="left:33px;top:943px;width:1086px;height:1px;background:#c6c6c6"></div>
<div class="r" style="left:33px;top:164px;width:64px;height:29px;overflow:hidden"><div class="t" style="left:0.50px;top:12.73px;font-size:14.5px;line-height:14.5px">SKU</div></div>
<div class="r" style="left:33px;top:194px;width:1086px;height:29px;overflow:hidden"><div class="t" style="left:1.00px;top:12.73px;font-size:14.5px;line-height:14.5px">Under Glove</div></div>
<div class="r" style="left:33px;top:224px;width:60.599999999999994px;height:29px;overflow:hidden"><div class="t" style="left:3.00px;top:12.73px;font-size:14.5px;line-height:14.5px">True Black</div></div>
<svg class="r" style="left:92.5px;top:234px;" width="5" height="8" viewBox="0 0 5 8"><path d="M0.6 0.6L4.3 4 0.6 7.4z" fill="#ff0000" stroke="#000" stroke-width="0.9" stroke-linejoin="round"/></svg>
<div class="r" style="left:33px;top:254px;width:64px;height:29px;overflow:hidden"><div class="t" style="right:9.50px;top:12.73px;font-size:14.5px;line-height:14.5px">True Black</div></div>
<div class="r" style="left:33px;top:284px;width:64px;height:29px;overflow:hidden"><div class="t" style="right:1.70px;top:12.73px;font-size:14.5px;line-height:14.5px">True Black</div></div>
<div class="r" style="left:33px;top:314px;width:1086px;height:29px;overflow:hidden"><div class="t" style="left:-1.70px;top:12.73px;font-size:14.5px;line-height:14.5px"><span style="letter-spacing:0.35px">Under Mitt</span></div></div>
<div class="r" style="left:33px;top:344px;width:64px;height:29px;overflow:hidden"><div class="t" style="right:10.70px;top:12.73px;font-size:14.5px;line-height:14.5px">True Black</div></div>
<div class="r" style="left:33px;top:374px;width:60.599999999999994px;height:29px;overflow:hidden"><div class="t" style="left:3.00px;top:12.73px;font-size:14.5px;line-height:14.5px">True Black</div></div>
<svg class="r" style="left:92.5px;top:384px;" width="5" height="8" viewBox="0 0 5 8"><path d="M0.6 0.6L4.3 4 0.6 7.4z" fill="#ff0000" stroke="#000" stroke-width="0.9" stroke-linejoin="round"/></svg>
<div class="r" style="left:33px;top:404px;width:64px;height:29px;overflow:hidden"><div class="t" style="right:9.80px;top:12.73px;font-size:14.5px;line-height:14.5px">True Black</div></div>
<div class="r" style="left:33px;top:434px;width:1086px;height:29px;overflow:hidden"><div class="t" style="right:1007.00px;top:12.73px;font-size:14.5px;line-height:14.5px">Under Glove</div></div>
<div class="r" style="left:33px;top:464px;width:64px;height:29px;overflow:hidden"><div class="t" style="right:10.70px;top:12.73px;font-size:14.5px;line-height:14.5px">True Black</div></div>
<div class="r" style="left:33px;top:494px;width:60.599999999999994px;height:29px;overflow:hidden"><div class="t" style="left:3.60px;top:12.73px;font-size:14.5px;line-height:14.5px">True Black</div></div>
<svg class="r" style="left:92.5px;top:504px;" width="5" height="8" viewBox="0 0 5 8"><path d="M0.6 0.6L4.3 4 0.6 7.4z" fill="#ff0000" stroke="#000" stroke-width="0.9" stroke-linejoin="round"/></svg>
<div class="r" style="left:33px;top:524px;width:64px;height:29px;overflow:hidden"><div class="t" style="right:9.50px;top:12.73px;font-size:14.5px;line-height:14.5px">True Black</div></div>
<div class="r" style="left:33px;top:554px;width:64px;height:29px;overflow:hidden"><div class="t" style="right:1.90px;top:12.73px;font-size:14.5px;line-height:14.5px">True Black</div></div>
<div class="r" style="left:33px;top:584px;width:1086px;height:29px;overflow:hidden"><div class="t" style="right:1050.40px;top:12.73px;font-size:14.5px;line-height:14.5px">Glove</div></div>
<div class="r" style="left:33px;top:614px;width:60.599999999999994px;height:29px;overflow:hidden"><div class="t" style="left:3.30px;top:12.73px;font-size:14.5px;line-height:14.5px">Black/Polar</div></div>
<svg class="r" style="left:92.5px;top:624px;" width="5" height="8" viewBox="0 0 5 8"><path d="M0.6 0.6L4.3 4 0.6 7.4z" fill="#ff0000" stroke="#000" stroke-width="0.9" stroke-linejoin="round"/></svg>
<div class="r" style="left:33px;top:644px;width:60.599999999999994px;height:29px;overflow:hidden"><div class="t" style="left:3.30px;top:12.73px;font-size:14.5px;line-height:14.5px">Black/Volcano</div></div>
<svg class="r" style="left:92.5px;top:654px;" width="5" height="8" viewBox="0 0 5 8"><path d="M0.6 0.6L4.3 4 0.6 7.4z" fill="#ff0000" stroke="#000" stroke-width="0.9" stroke-linejoin="round"/></svg>
<div class="r" style="left:33px;top:674px;width:64px;height:29px;overflow:hidden"><div class="t" style="right:3.50px;top:12.73px;font-size:14.5px;line-height:14.5px">Black/Polar</div></div>
<div class="r" style="left:33px;top:704px;width:64px;height:29px;overflow:hidden"><div class="t" style="right:1.90px;top:12.73px;font-size:14.5px;line-height:14.5px">Black/Black</div></div>
<div class="r" style="left:33px;top:734px;width:60.599999999999994px;height:29px;overflow:hidden"><div class="t" style="left:-1.20px;top:12.73px;font-size:14.5px;line-height:14.5px">ack/Volcano</div></div>
<svg class="r" style="left:92.5px;top:744px;" width="5" height="8" viewBox="0 0 5 8"><path d="M0.6 0.6L4.3 4 0.6 7.4z" fill="#ff0000" stroke="#000" stroke-width="0.9" stroke-linejoin="round"/></svg>
<div class="r" style="left:33px;top:764px;width:60.599999999999994px;height:29px;overflow:hidden"><div class="t" style="left:-7.70px;top:12.73px;font-size:14.5px;line-height:14.5px">Black/Polar</div></div>
<svg class="r" style="left:92.5px;top:774px;" width="5" height="8" viewBox="0 0 5 8"><path d="M0.6 0.6L4.3 4 0.6 7.4z" fill="#ff0000" stroke="#000" stroke-width="0.9" stroke-linejoin="round"/></svg>
<div class="r" style="left:33px;top:794px;width:60.599999999999994px;height:29px;overflow:hidden"><div class="t" style="left:-7.70px;top:12.73px;font-size:14.5px;line-height:14.5px">Black/Volcano</div></div>
<svg class="r" style="left:92.5px;top:804px;" width="5" height="8" viewBox="0 0 5 8"><path d="M0.6 0.6L4.3 4 0.6 7.4z" fill="#ff0000" stroke="#000" stroke-width="0.9" stroke-linejoin="round"/></svg>
<div class="r" style="left:33px;top:854px;width:64px;height:29px;overflow:hidden"><div class="t" style="right:42.80px;top:12.73px;font-size:14.5px;line-height:14.5px">Black</div></div>
<div class="r" style="left:33px;top:884px;width:1086px;height:29px;overflow:hidden"><div class="t" style="right:1020.70px;top:12.73px;font-size:14.5px;line-height:14.5px">Product Liner</div></div>
<div class="r" style="left:33px;top:914px;width:64px;height:29px;overflow:hidden"><div class="t" style="right:4.40px;top:12.73px;font-size:14.5px;line-height:14.5px">Black/Polar</div></div>
<div class="r" style="left:33px;top:944px;width:60.599999999999994px;height:29px;overflow:hidden"><div class="t" style="left:3.20px;top:12.73px;font-size:14.5px;line-height:14.5px">Black/Polar</div></div>
<svg class="r" style="left:92.5px;top:954px;" width="5" height="8" viewBox="0 0 5 8"><path d="M0.6 0.6L4.3 4 0.6 7.4z" fill="#ff0000" stroke="#000" stroke-width="0.9" stroke-linejoin="round"/></svg>
<div class="r" style="left:98px;top:164px;width:64px;height:29px;overflow:hidden"><div class="t" style="left:1px;top:12.73px;font-size:14.5px;line-height:14.5px">Price</div></div>
<div class="r" style="left:228px;top:164px;width:64px;height:29px;overflow:hidden"><div class="t" style="left:1px;top:12.73px;font-size:14.5px;line-height:14.5px">Item cost</div></div>
<div class="r" style="left:293px;top:164px;width:64px;height:29px;overflow:hidden"><div class="t" style="left:1px;top:12.73px;font-size:14.5px;line-height:14.5px">Stock</div></div>
<div class="r" style="left:358px;top:164px;width:64px;height:29px;overflow:hidden"><div class="t" style="left:1px;top:12.73px;font-size:14.5px;line-height:14.5px">SEO Title</div></div>
<div class="r" style="left:488px;top:164px;width:64px;height:29px;overflow:hidden"><div class="t" style="left:1px;top:12.73px;font-size:14.5px;line-height:14.5px">Option1</div></div>
<div class="r" style="left:553px;top:164px;width:64px;height:29px;overflow:hidden"><div class="t" style="left:1px;top:12.73px;font-size:14.5px;line-height:14.5px">Option2</div></div>
<div class="r" style="left:618px;top:164px;width:64px;height:29px;overflow:hidden"><div class="t" style="left:1px;top:12.73px;font-size:14.5px;line-height:14.5px">Option3</div></div>
<div class="r" style="left:878px;top:164px;width:64px;height:29px;overflow:hidden"><div class="t" style="left:1px;top:12.73px;font-size:14.5px;line-height:14.5px">Tax code</div></div>
<div class="r" style="left:943px;top:164px;width:64px;height:29px;overflow:hidden"><div class="t" style="left:1px;top:12.73px;font-size:14.5px;line-height:14.5px">Barcode</div></div>
<div class="r" style="left:1008px;top:164px;width:64px;height:29px;overflow:hidden"><div class="t" style="left:1px;top:12.73px;font-size:14.5px;line-height:14.5px">Handle</div></div>
<div class="r" style="left:1073px;top:164px;width:46px;height:29px;overflow:hidden"><div class="t" style="left:1px;top:12.73px;font-size:14.5px;line-height:14.5px">Position</div></div>
<div class="r" style="left:163px;top:164px;width:61px;height:29px;overflow:hidden"><div class="t" style="left:1px;top:12.73px;font-size:14.5px;line-height:14.5px">Compare at price</div></div>
<svg class="r" style="left:222.5px;top:174px;" width="5" height="8" viewBox="0 0 5 8"><path d="M0.6 0.6L4.3 4 0.6 7.4z" fill="#ff0000" stroke="#000" stroke-width="0.9" stroke-linejoin="round"/></svg>
<div class="r" style="left:423px;top:164px;width:61px;height:29px;overflow:hidden"><div class="t" style="left:1px;top:12.73px;font-size:14.5px;line-height:14.5px">SEO Description</div></div>
<svg class="r" style="left:482.5px;top:174px;" width="5" height="8" viewBox="0 0 5 8"><path d="M0.6 0.6L4.3 4 0.6 7.4z" fill="#ff0000" stroke="#000" stroke-width="0.9" stroke-linejoin="round"/></svg>
<div class="r" style="left:683px;top:164px;width:61px;height:29px;overflow:hidden"><div class="t" style="left:1px;top:12.73px;font-size:14.5px;line-height:14.5px">Product Type</div></div>
<svg class="r" style="left:742.5px;top:174px;" width="5" height="8" viewBox="0 0 5 8"><path d="M0.6 0.6L4.3 4 0.6 7.4z" fill="#ff0000" stroke="#000" stroke-width="0.9" stroke-linejoin="round"/></svg>
<div class="r" style="left:748px;top:164px;width:61px;height:29px;overflow:hidden"><div class="t" style="left:1px;top:12.73px;font-size:14.5px;line-height:14.5px">Custom collections</div></div>
<svg class="r" style="left:807.5px;top:174px;" width="5" height="8" viewBox="0 0 5 8"><path d="M0.6 0.6L4.3 4 0.6 7.4z" fill="#ff0000" stroke="#000" stroke-width="0.9" stroke-linejoin="round"/></svg>
<div class="r" style="left:813px;top:164px;width:61px;height:29px;overflow:hidden"><div class="t" style="left:1px;top:12.73px;font-size:14.5px;line-height:14.5px">Smart collections</div></div>
<svg class="r" style="left:872.5px;top:174px;" width="5" height="8" viewBox="0 0 5 8"><path d="M0.6 0.6L4.3 4 0.6 7.4z" fill="#ff0000" stroke="#000" stroke-width="0.9" stroke-linejoin="round"/></svg>
<div class="r" style="left:488px;top:194px;width:631px;height:29px;overflow:hidden"><div class="t" style="left:1px;top:12.73px;font-size:14.5px;line-height:14.5px">Size</div></div>
<div class="r" style="left:553px;top:194px;width:566px;height:29px;overflow:hidden"><div class="t" style="left:1px;top:12.73px;font-size:14.5px;line-height:14.5px">Color</div></div>
<svg class="r" style="left:554px;top:220px;overflow:hidden;" width="36" height="3" viewBox="0 0 36 3"><polyline points="0,2.5 1,2.5 3,0.5 5,0.5 7,2.5 9,2.5 11,0.5 13,0.5 15,2.5 17,2.5 19,0.5 21,0.5 23,2.5 25,2.5 27,0.5 29,0.5 31,2.5 33,2.5 35,0.5 37,0.5 39,2.5" fill="none" stroke="#ff0000" stroke-width="1.1"/></svg>
<div class="r" style="left:683px;top:194px;width:436px;height:29px;overflow:hidden"><div class="t" style="left:1px;top:12.73px;font-size:14.5px;line-height:14.5px">Gloves</div></div>
<div class="r" style="left:748px;top:194px;width:371px;height:29px;overflow:hidden"><div class="t" style="left:1px;top:12.73px;font-size:14.5px;line-height:14.5px">Home page</div></div>
<div class="r" style="left:1008px;top:194px;width:111px;height:29px;overflow:hidden"><div class="t" style="left:1px;top:12.73px;font-size:14.5px;line-height:14.5px">burton-approach-under-glove</div></div>
<svg class="r" style="left:1009px;top:220px;overflow:hidden;" width="110" height="3" viewBox="0 0 110 3"><polyline points="0,2.5 1,2.5 3,0.5 5,0.5 7,2.5 9,2.5 11,0.5 13,0.5 15,2.5 17,2.5 19,0.5 21,0.5 23,2.5 25,2.5 27,0.5 29,0.5 31,2.5 33,2.5 35,0.5 37,0.5 39,2.5 41,2.5 43,0.5 45,0.5 47,2.5 49,2.5 51,0.5 53,0.5 55,2.5 57,2.5 59,0.5 61,0.5 63,2.5 65,2.5 67,0.5 69,0.5 71,2.5 73,2.5 75,0.5 77,0.5 79,2.5 81,2.5 83,0.5 85,0.5 87,2.5 89,2.5 91,0.5 93,0.5 95,2.5 97,2.5 99,0.5 101,0.5 103,2.5 105,2.5 107,0.5 109,0.5 111,2.5" fill="none" stroke="#ff0000" stroke-width="1.1"/></svg>
<div class="r" style="left:98px;top:224px;width:1021px;height:29px;overflow:hidden"><div class="t" style="left:1px;top:12.73px;font-size:14.5px;line-height:14.5px">54.95</div></div>
<div class="r" style="left:293px;top:224px;width:826px;height:29px;overflow:hidden"><div class="t" style="left:1px;top:12.73px;font-size:14.5px;line-height:14.5px">4</div></div>
<div class="r" style="left:488px;top:224px;width:631px;height:29px;overflow:hidden"><div class="t" style="left:1px;top:12.73px;font-size:14.5px;line-height:14.5px">Medium</div></div>
<div class="r" style="left:553px;top:224px;width:566px;height:29px;overflow:hidden"><div class="t" style="left:1px;top:12.73px;font-size:14.5px;line-height:14.5px">True Black</div></div>
<div class="r" style="left:943px;top:224px;width:176px;height:29px;overflow:hidden"><div class="t" style="left:1px;top:12.73px;font-size:14.5px;line-height:14.5px">9009518582030</div></div>
<div class="r" style="left:1073px;top:224px;width:46px;height:29px;overflow:hidden"><div class="t" style="left:1px;top:12.73px;font-size:14.5px;line-height:14.5px">1</div></div>
<div class="r" style="left:98px;top:254px;width:1021px;height:29px;overflow:hidden"><div class="t" style="left:1px;top:12.73px;font-size:14.5px;line-height:14.5px">54.95</div></div>
<div class="r" style="left:293px;top:254px;width:826px;height:29px;overflow:hidden"><div class="t" style="left:1px;top:12.73px;font-size:14.5px;line-height:14.5px">4</div></div>
<div class="r" style="left:488px;top:254px;width:631px;height:29px;overflow:hidden"><div class="t" style="left:1px;top:12.73px;font-size:14.5px;line-height:14.5px">Large</div></div>
<div class="r" style="left:553px;top:254px;width:566px;height:29px;overflow:hidden"><div class="t" style="left:1px;top:12.73px;font-size:14.5px;line-height:14.5px">True Black</div></div>
<div class="r" style="left:943px;top:254px;width:176px;height:29px;overflow:hidden"><div class="t" style="left:1px;top:12.73px;font-size:14.5px;line-height:14.5px">9009518582023</div></div>
<div class="r" style="left:1073px;top:254px;width:46px;height:29px;overflow:hidden"><div class="t" style="left:1px;top:12.73px;font-size:14.5px;line-height:14.5px">2</div></div>
<div class="r" style="left:98px;top:284px;width:1021px;height:29px;overflow:hidden"><div class="t" style="left:1px;top:12.73px;font-size:14.5px;line-height:14.5px">54.95</div></div>
<div class="r" style="left:293px;top:284px;width:826px;height:29px;overflow:hidden"><div class="t" style="left:1px;top:12.73px;font-size:14.5px;line-height:14.5px">3</div></div>
<div class="r" style="left:488px;top:284px;width:631px;height:29px;overflow:hidden"><div class="t" style="left:1px;top:12.73px;font-size:14.5px;line-height:14.5px">XLarge</div></div>
<svg class="r" style="left:489px;top:310px;overflow:hidden;" width="44" height="3" viewBox="0 0 44 3"><polyline points="0,2.5 1,2.5 3,0.5 5,0.5 7,2.5 9,2.5 11,0.5 13,0.5 15,2.5 17,2.5 19,0.5 21,0.5 23,2.5 25,2.5 27,0.5 29,0.5 31,2.5 33,2.5 35,0.5 37,0.5 39,2.5 41,2.5 43,0.5 45,0.5 47,2.5" fill="none" stroke="#ff0000" stroke-width="1.1"/></svg>
<div class="r" style="left:553px;top:284px;width:566px;height:29px;overflow:hidden"><div class="t" style="left:1px;top:12.73px;font-size:14.5px;line-height:14.5px">True Black</div></div>
<div class="r" style="left:943px;top:284px;width:176px;height:29px;overflow:hidden"><div class="t" style="left:1px;top:12.73px;font-size:14.5px;line-height:14.5px">9009518582054</div></div>
<div class="r" style="left:1073px;top:284px;width:46px;height:29px;overflow:hidden"><div class="t" style="left:1px;top:12.73px;font-size:14.5px;line-height:14.5px">3</div></div>
<div class="r" style="left:488px;top:314px;width:631px;height:29px;overflow:hidden"><div class="t" style="left:1px;top:12.73px;font-size:14.5px;line-height:14.5px">Size</div></div>
<div class="r" style="left:553px;top:314px;width:566px;height:29px;overflow:hidden"><div class="t" style="left:1px;top:12.73px;font-size:14.5px;line-height:14.5px">Color</div></div>
<svg class="r" style="left:554px;top:340px;overflow:hidden;" width="36" height="3" viewBox="0 0 36 3"><polyline points="0,2.5 1,2.5 3,0.5 5,0.5 7,2.5 9,2.5 11,0.5 13,0.5 15,2.5 17,2.5 19,0.5 21,0.5 23,2.5 25,2.5 27,0.5 29,0.5 31,2.5 33,2.5 35,0.5 37,0.5 39,2.5" fill="none" stroke="#ff0000" stroke-width="1.1"/></svg>
<div class="r" style="left:683px;top:314px;width:436px;height:29px;overflow:hidden"><div class="t" style="left:1px;top:12.73px;font-size:14.5px;line-height:14.5px">Gloves</div></div>
<div class="r" style="left:1008px;top:314px;width:111px;height:29px;overflow:hidden"><div class="t" style="left:1px;top:12.73px;font-size:14.5px;line-height:14.5px">burton-gore-tex-under-mitt</div></div>
<svg class="r" style="left:1009px;top:340px;overflow:hidden;" width="110" height="3" viewBox="0 0 110 3"><polyline points="0,2.5 1,2.5 3,0.5 5,0.5 7,2.5 9,2.5 11,0.5 13,0.5 15,2.5 17,2.5 19,0.5 21,0.5 23,2.5 25,2.5 27,0.5 29,0.5 31,2.5 33,2.5 35,0.5 37,0.5 39,2.5 41,2.5 43,0.5 45,0.5 47,2.5 49,2.5 51,0.5 53,0.5 55,2.5 57,2.5 59,0.5 61,0.5 63,2.5 65,2.5 67,0.5 69,0.5 71,2.5 73,2.5 75,0.5 77,0.5 79,2.5 81,2.5 83,0.5 85,0.5 87,2.5 89,2.5 91,0.5 93,0.5 95,2.5 97,2.5 99,0.5 101,0.5 103,2.5 105,2.5 107,0.5 109,0.5 111,2.5" fill="none" stroke="#ff0000" stroke-width="1.1"/></svg>
<div class="r" style="left:98px;top:344px;width:1021px;height:29px;overflow:hidden"><div class="t" style="left:1px;top:12.73px;font-size:14.5px;line-height:14.5px">69.95</div></div>
<div class="r" style="left:293px;top:344px;width:826px;height:29px;overflow:hidden"><div class="t" style="left:1px;top:12.73px;font-size:14.5px;line-height:14.5px">2</div></div>
<div class="r" style="left:488px;top:344px;width:631px;height:29px;overflow:hidden"><div class="t" style="left:1px;top:12.73px;font-size:14.5px;line-height:14.5px">Small</div></div>
<div class="r" style="left:553px;top:344px;width:566px;height:29px;overflow:hidden"><div class="t" style="left:1px;top:12.73px;font-size:14.5px;line-height:14.5px">True Black</div></div>
<div class="r" style="left:943px;top:344px;width:176px;height:29px;overflow:hidden"><div class="t" style="left:1px;top:12.73px;font-size:14.5px;line-height:14.5px">9009518598635</div></div>
<div class="r" style="left:1073px;top:344px;width:46px;height:29px;overflow:hidden"><div class="t" style="left:1px;top:12.73px;font-size:14.5px;line-height:14.5px">1</div></div>
<div class="r" style="left:98px;top:374px;width:1021px;height:29px;overflow:hidden"><div class="t" style="left:1px;top:12.73px;font-size:14.5px;line-height:14.5px">69.95</div></div>
<div class="r" style="left:293px;top:374px;width:826px;height:29px;overflow:hidden"><div class="t" style="left:1px;top:12.73px;font-size:14.5px;line-height:14.5px">3</div></div>
<div class="r" style="left:488px;top:374px;width:631px;height:29px;overflow:hidden"><div class="t" style="left:1px;top:12.73px;font-size:14.5px;line-height:14.5px">Medium</div></div>
<div class="r" style="left:553px;top:374px;width:566px;height:29px;overflow:hidden"><div class="t" style="left:1px;top:12.73px;font-size:14.5px;line-height:14.5px">True Black</div></div>
<div class="r" style="left:943px;top:374px;width:176px;height:29px;overflow:hidden"><div class="t" style="left:1px;top:12.73px;font-size:14.5px;line-height:14.5px">9009518598628</div></div>
<div class="r" style="left:1073px;top:374px;width:46px;height:29px;overflow:hidden"><div class="t" style="left:1px;top:12.73px;font-size:14.5px;line-height:14.5px">2</div></div>
<div class="r" style="left:98px;top:404px;width:1021px;height:29px;overflow:hidden"><div class="t" style="left:1px;top:12.73px;font-size:14.5px;line-height:14.5px">69.95</div></div>
<div class="r" style="left:293px;top:404px;width:826px;height:29px;overflow:hidden"><div class="t" style="left:1px;top:12.73px;font-size:14.5px;line-height:14.5px">3</div></div>
<div class="r" style="left:488px;top:404px;width:631px;height:29px;overflow:hidden"><div class="t" style="left:1px;top:12.73px;font-size:14.5px;line-height:14.5px">Large</div></div>
<div class="r" style="left:553px;top:404px;width:566px;height:29px;overflow:hidden"><div class="t" style="left:1px;top:12.73px;font-size:14.5px;line-height:14.5px">True Black</div></div>
<div class="r" style="left:943px;top:404px;width:176px;height:29px;overflow:hidden"><div class="t" style="left:1px;top:12.73px;font-size:14.5px;line-height:14.5px">9009518598611</div></div>
<div class="r" style="left:1073px;top:404px;width:46px;height:29px;overflow:hidden"><div class="t" style="left:1px;top:12.73px;font-size:14.5px;line-height:14.5px">3</div></div>
<div class="r" style="left:488px;top:434px;width:631px;height:29px;overflow:hidden"><div class="t" style="left:1px;top:12.73px;font-size:14.5px;line-height:14.5px">Size</div></div>
<div class="r" style="left:553px;top:434px;width:566px;height:29px;overflow:hidden"><div class="t" style="left:1px;top:12.73px;font-size:14.5px;line-height:14.5px">Color</div></div>
<svg class="r" style="left:554px;top:460px;overflow:hidden;" width="36" height="3" viewBox="0 0 36 3"><polyline points="0,2.5 1,2.5 3,0.5 5,0.5 7,2.5 9,2.5 11,0.5 13,0.5 15,2.5 17,2.5 19,0.5 21,0.5 23,2.5 25,2.5 27,0.5 29,0.5 31,2.5 33,2.5 35,0.5 37,0.5 39,2.5" fill="none" stroke="#ff0000" stroke-width="1.1"/></svg>
<div class="r" style="left:683px;top:434px;width:436px;height:29px;overflow:hidden"><div class="t" style="left:1px;top:12.73px;font-size:14.5px;line-height:14.5px">Gloves</div></div>
<div class="r" style="left:1008px;top:434px;width:111px;height:29px;overflow:hidden"><div class="t" style="left:1px;top:12.73px;font-size:14.5px;line-height:14.5px">burton-gore-tex-under-glove</div></div>
<svg class="r" style="left:1009px;top:460px;overflow:hidden;" width="110" height="3" viewBox="0 0 110 3"><polyline points="0,2.5 1,2.5 3,0.5 5,0.5 7,2.5 9,2.5 11,0.5 13,0.5 15,2.5 17,2.5 19,0.5 21,0.5 23,2.5 25,2.5 27,0.5 29,0.5 31,2.5 33,2.5 35,0.5 37,0.5 39,2.5 41,2.5 43,0.5 45,0.5 47,2.5 49,2.5 51,0.5 53,0.5 55,2.5 57,2.5 59,0.5 61,0.5 63,2.5 65,2.5 67,0.5 69,0.5 71,2.5 73,2.5 75,0.5 77,0.5 79,2.5 81,2.5 83,0.5 85,0.5 87,2.5 89,2.5 91,0.5 93,0.5 95,2.5 97,2.5 99,0.5 101,0.5 103,2.5 105,2.5 107,0.5 109,0.5 111,2.5" fill="none" stroke="#ff0000" stroke-width="1.1"/></svg>
<div class="r" style="left:98px;top:464px;width:1021px;height:29px;overflow:hidden"><div class="t" style="left:1px;top:12.73px;font-size:14.5px;line-height:14.5px">69.95</div></div>
<div class="r" style="left:293px;top:464px;width:826px;height:29px;overflow:hidden"><div class="t" style="left:1px;top:12.73px;font-size:14.5px;line-height:14.5px">2</div></div>
<div class="r" style="left:488px;top:464px;width:631px;height:29px;overflow:hidden"><div class="t" style="left:1px;top:12.73px;font-size:14.5px;line-height:14.5px">Small</div></div>
<div class="r" style="left:553px;top:464px;width:566px;height:29px;overflow:hidden"><div class="t" style="left:1px;top:12.73px;font-size:14.5px;line-height:14.5px">True Black</div></div>
<div class="r" style="left:943px;top:464px;width:176px;height:29px;overflow:hidden"><div class="t" style="left:1px;top:12.73px;font-size:14.5px;line-height:14.5px">9009518583945</div></div>
<div class="r" style="left:1073px;top:464px;width:46px;height:29px;overflow:hidden"><div class="t" style="left:1px;top:12.73px;font-size:14.5px;line-height:14.5px">1</div></div>
<div class="r" style="left:98px;top:494px;width:1021px;height:29px;overflow:hidden"><div class="t" style="left:1px;top:12.73px;font-size:14.5px;line-height:14.5px">69.95</div></div>
<div class="r" style="left:293px;top:494px;width:826px;height:29px;overflow:hidden"><div class="t" style="left:1px;top:12.73px;font-size:14.5px;line-height:14.5px">2</div></div>
<div class="r" style="left:488px;top:494px;width:631px;height:29px;overflow:hidden"><div class="t" style="left:1px;top:12.73px;font-size:14.5px;line-height:14.5px">Medium</div></div>
<div class="r" style="left:553px;top:494px;width:566px;height:29px;overflow:hidden"><div class="t" style="left:1px;top:12.73px;font-size:14.5px;line-height:14.5px">True Black</div></div>
<div class="r" style="left:943px;top:494px;width:176px;height:29px;overflow:hidden"><div class="t" style="left:1px;top:12.73px;font-size:14.5px;line-height:14.5px">9009518583938</div></div>
<div class="r" style="left:1073px;top:494px;width:46px;height:29px;overflow:hidden"><div class="t" style="left:1px;top:12.73px;font-size:14.5px;line-height:14.5px">2</div></div>
<div class="r" style="left:98px;top:524px;width:1021px;height:29px;overflow:hidden"><div class="t" style="left:1px;top:12.73px;font-size:14.5px;line-height:14.5px">69.95</div></div>
<div class="r" style="left:293px;top:524px;width:826px;height:29px;overflow:hidden"><div class="t" style="left:1px;top:12.73px;font-size:14.5px;line-height:14.5px">3</div></div>
<div class="r" style="left:488px;top:524px;width:631px;height:29px;overflow:hidden"><div class="t" style="left:1px;top:12.73px;font-size:14.5px;line-height:14.5px">Large</div></div>
<div class="r" style="left:553px;top:524px;width:566px;height:29px;overflow:hidden"><div class="t" style="left:1px;top:12.73px;font-size:14.5px;line-height:14.5px">True Black</div></div>
<div class="r" style="left:943px;top:524px;width:176px;height:29px;overflow:hidden"><div class="t" style="left:1px;top:12.73px;font-size:14.5px;line-height:14.5px">9009518583921</div></div>
<div class="r" style="left:1073px;top:524px;width:46px;height:29px;overflow:hidden"><div class="t" style="left:1px;top:12.73px;font-size:14.5px;line-height:14.5px">3</div></div>
<div class="r" style="left:98px;top:554px;width:1021px;height:29px;overflow:hidden"><div class="t" style="left:1px;top:12.73px;font-size:14.5px;line-height:14.5px">69.95</div></div>
<div class="r" style="left:293px;top:554px;width:826px;height:29px;overflow:hidden"><div class="t" style="left:1px;top:12.73px;font-size:14.5px;line-height:14.5px">10</div></div>
<div class="r" style="left:488px;top:554px;width:631px;height:29px;overflow:hidden"><div class="t" style="left:1px;top:12.73px;font-size:14.5px;line-height:14.5px">XLarge</div></div>
<svg class="r" style="left:489px;top:580px;overflow:hidden;" width="44" height="3" viewBox="0 0 44 3"><polyline points="0,2.5 1,2.5 3,0.5 5,0.5 7,2.5 9,2.5 11,0.5 13,0.5 15,2.5 17,2.5 19,0.5 21,0.5 23,2.5 25,2.5 27,0.5 29,0.5 31,2.5 33,2.5 35,0.5 37,0.5 39,2.5 41,2.5 43,0.5 45,0.5 47,2.5" fill="none" stroke="#ff0000" stroke-width="1.1"/></svg>
<div class="r" style="left:553px;top:554px;width:566px;height:29px;overflow:hidden"><div class="t" style="left:1px;top:12.73px;font-size:14.5px;line-height:14.5px">True Black</div></div>
<div class="r" style="left:943px;top:554px;width:176px;height:29px;overflow:hidden"><div class="t" style="left:1px;top:12.73px;font-size:14.5px;line-height:14.5px">9009518583952</div></div>
<div class="r" style="left:1073px;top:554px;width:46px;height:29px;overflow:hidden"><div class="t" style="left:1px;top:12.73px;font-size:14.5px;line-height:14.5px">4</div></div>
<div class="r" style="left:488px;top:584px;width:631px;height:29px;overflow:hidden"><div class="t" style="left:1px;top:12.73px;font-size:14.5px;line-height:14.5px">Size</div></div>
<div class="r" style="left:553px;top:584px;width:566px;height:29px;overflow:hidden"><div class="t" style="left:1px;top:12.73px;font-size:14.5px;line-height:14.5px">Color</div></div>
<svg class="r" style="left:554px;top:610px;overflow:hidden;" width="36" height="3" viewBox="0 0 36 3"><polyline points="0,2.5 1,2.5 3,0.5 5,0.5 7,2.5 9,2.5 11,0.5 13,0.5 15,2.5 17,2.5 19,0.5 21,0.5 23,2.5 25,2.5 27,0.5 29,0.5 31,2.5 33,2.5 35,0.5 37,0.5 39,2.5" fill="none" stroke="#ff0000" stroke-width="1.1"/></svg>
<div class="r" style="left:683px;top:584px;width:436px;height:29px;overflow:hidden"><div class="t" style="left:1px;top:12.73px;font-size:14.5px;line-height:14.5px">Gloves</div></div>
<div class="r" style="left:1008px;top:584px;width:111px;height:29px;overflow:hidden"><div class="t" style="left:1px;top:12.73px;font-size:14.5px;line-height:14.5px">spyder-overweb-glove</div></div>
<svg class="r" style="left:1009px;top:610px;overflow:hidden;" width="110" height="3" viewBox="0 0 110 3"><polyline points="0,2.5 1,2.5 3,0.5 5,0.5 7,2.5 9,2.5 11,0.5 13,0.5 15,2.5 17,2.5 19,0.5 21,0.5 23,2.5 25,2.5 27,0.5 29,0.5 31,2.5 33,2.5 35,0.5 37,0.5 39,2.5 41,2.5 43,0.5 45,0.5 47,2.5 49,2.5 51,0.5 53,0.5 55,2.5 57,2.5 59,0.5 61,0.5 63,2.5 65,2.5 67,0.5 69,0.5 71,2.5 73,2.5 75,0.5 77,0.5 79,2.5 81,2.5 83,0.5 85,0.5 87,2.5 89,2.5 91,0.5 93,0.5 95,2.5 97,2.5 99,0.5 101,0.5 103,2.5 105,2.5 107,0.5 109,0.5 111,2.5" fill="none" stroke="#ff0000" stroke-width="1.1"/></svg>
<div class="r" style="left:98px;top:614px;width:1021px;height:29px;overflow:hidden"><div class="t" style="left:1px;top:12.73px;font-size:14.5px;line-height:14.5px">85.00</div></div>
<div class="r" style="left:293px;top:614px;width:826px;height:29px;overflow:hidden"><div class="t" style="left:1px;top:12.73px;font-size:14.5px;line-height:14.5px">10</div></div>
<div class="r" style="left:488px;top:614px;width:631px;height:29px;overflow:hidden"><div class="t" style="left:1px;top:12.73px;font-size:14.5px;line-height:14.5px">Medium</div></div>
<div class="r" style="left:553px;top:614px;width:566px;height:29px;overflow:hidden"><div class="t" style="left:1px;top:12.73px;font-size:14.5px;line-height:14.5px">Black/Polar</div></div>
<div class="r" style="left:943px;top:614px;width:176px;height:29px;overflow:hidden"><div class="t" style="left:1px;top:12.73px;font-size:14.5px;line-height:14.5px">889212070045</div></div>
<div class="r" style="left:1073px;top:614px;width:46px;height:29px;overflow:hidden"><div class="t" style="left:1px;top:12.73px;font-size:14.5px;line-height:14.5px">1</div></div>
<div class="r" style="left:98px;top:644px;width:1021px;height:29px;overflow:hidden"><div class="t" style="left:1px;top:12.73px;font-size:14.5px;line-height:14.5px">85.00</div></div>
<div class="r" style="left:293px;top:644px;width:826px;height:29px;overflow:hidden"><div class="t" style="left:1px;top:12.73px;font-size:14.5px;line-height:14.5px">10</div></div>
<div class="r" style="left:488px;top:644px;width:631px;height:29px;overflow:hidden"><div class="t" style="left:1px;top:12.73px;font-size:14.5px;line-height:14.5px">Medium</div></div>
<div class="r" style="left:553px;top:644px;width:566px;height:29px;overflow:hidden"><div class="t" style="left:1px;top:12.73px;font-size:14.5px;line-height:14.5px">Black/Volcano</div></div>
<div class="r" style="left:943px;top:644px;width:176px;height:29px;overflow:hidden"><div class="t" style="left:1px;top:12.73px;font-size:14.5px;line-height:14.5px">889212070052</div></div>
<div class="r" style="left:1073px;top:644px;width:46px;height:29px;overflow:hidden"><div class="t" style="left:1px;top:12.73px;font-size:14.5px;line-height:14.5px">2</div></div>
<div class="r" style="left:98px;top:674px;width:1021px;height:29px;overflow:hidden"><div class="t" style="left:1px;top:12.73px;font-size:14.5px;line-height:14.5px">85.00</div></div>
<div class="r" style="left:293px;top:674px;width:826px;height:29px;overflow:hidden"><div class="t" style="left:1px;top:12.73px;font-size:14.5px;line-height:14.5px">10</div></div>
<div class="r" style="left:488px;top:674px;width:631px;height:29px;overflow:hidden"><div class="t" style="left:1px;top:12.73px;font-size:14.5px;line-height:14.5px">Large</div></div>
<div class="r" style="left:553px;top:674px;width:566px;height:29px;overflow:hidden"><div class="t" style="left:1px;top:12.73px;font-size:14.5px;line-height:14.5px">Black/Polar</div></div>
<div class="r" style="left:943px;top:674px;width:176px;height:29px;overflow:hidden"><div class="t" style="left:1px;top:12.73px;font-size:14.5px;line-height:14.5px">889212070090</div></div>
<div class="r" style="left:1073px;top:674px;width:46px;height:29px;overflow:hidden"><div class="t" style="left:1px;top:12.73px;font-size:14.5px;line-height:14.5px">3</div></div>
<div class="r" style="left:98px;top:704px;width:1021px;height:29px;overflow:hidden"><div class="t" style="left:1px;top:12.73px;font-size:14.5px;line-height:14.5px">85.00</div></div>
<div class="r" style="left:293px;top:704px;width:826px;height:29px;overflow:hidden"><div class="t" style="left:1px;top:12.73px;font-size:14.5px;line-height:14.5px">10</div></div>
<div class="r" style="left:488px;top:704px;width:631px;height:29px;overflow:hidden"><div class="t" style="left:1px;top:12.73px;font-size:14.5px;line-height:14.5px">Large</div></div>
<div class="r" style="left:553px;top:704px;width:566px;height:29px;overflow:hidden"><div class="t" style="left:1px;top:12.73px;font-size:14.5px;line-height:14.5px">Black/Black</div></div>
<div class="r" style="left:943px;top:704px;width:176px;height:29px;overflow:hidden"><div class="t" style="left:1px;top:12.73px;font-size:14.5px;line-height:14.5px">889212104351</div></div>
<div class="r" style="left:1073px;top:704px;width:46px;height:29px;overflow:hidden"><div class="t" style="left:1px;top:12.73px;font-size:14.5px;line-height:14.5px">4</div></div>
<div class="r" style="left:98px;top:734px;width:1021px;height:29px;overflow:hidden"><div class="t" style="left:1px;top:12.73px;font-size:14.5px;line-height:14.5px">85.00</div></div>
<div class="r" style="left:293px;top:734px;width:826px;height:29px;overflow:hidden"><div class="t" style="left:1px;top:12.73px;font-size:14.5px;line-height:14.5px">10</div></div>
<div class="r" style="left:488px;top:734px;width:631px;height:29px;overflow:hidden"><div class="t" style="left:1px;top:12.73px;font-size:14.5px;line-height:14.5px">Large</div></div>
<div class="r" style="left:553px;top:734px;width:566px;height:29px;overflow:hidden"><div class="t" style="left:1px;top:12.73px;font-size:14.5px;line-height:14.5px">Black/Volcano</div></div>
<div class="r" style="left:943px;top:734px;width:176px;height:29px;overflow:hidden"><div class="t" style="left:1px;top:12.73px;font-size:14.5px;line-height:14.5px">889212070083</div></div>
<div class="r" style="left:1073px;top:734px;width:46px;height:29px;overflow:hidden"><div class="t" style="left:1px;top:12.73px;font-size:14.5px;line-height:14.5px">5</div></div>
<div class="r" style="left:98px;top:764px;width:1021px;height:29px;overflow:hidden"><div class="t" style="left:1px;top:12.73px;font-size:14.5px;line-height:14.5px">85.00</div></div>
<div class="r" style="left:293px;top:764px;width:826px;height:29px;overflow:hidden"><div class="t" style="left:1px;top:12.73px;font-size:14.5px;line-height:14.5px">10</div></div>
<div class="r" style="left:488px;top:764px;width:631px;height:29px;overflow:hidden"><div class="t" style="left:1px;top:12.73px;font-size:14.5px;line-height:14.5px">XLarge</div></div>
<svg class="r" style="left:489px;top:790px;overflow:hidden;" width="44" height="3" viewBox="0 0 44 3"><polyline points="0,2.5 1,2.5 3,0.5 5,0.5 7,2.5 9,2.5 11,0.5 13,0.5 15,2.5 17,2.5 19,0.5 21,0.5 23,2.5 25,2.5 27,0.5 29,0.5 31,2.5 33,2.5 35,0.5 37,0.5 39,2.5 41,2.5 43,0.5 45,0.5 47,2.5" fill="none" stroke="#ff0000" stroke-width="1.1"/></svg>
<div class="r" style="left:553px;top:764px;width:566px;height:29px;overflow:hidden"><div class="t" style="left:1px;top:12.73px;font-size:14.5px;line-height:14.5px">Black/Polar</div></div>
<div class="r" style="left:943px;top:764px;width:176px;height:29px;overflow:hidden"><div class="t" style="left:1px;top:12.73px;font-size:14.5px;line-height:14.5px">889212070144</div></div>
<div class="r" style="left:1073px;top:764px;width:46px;height:29px;overflow:hidden"><div class="t" style="left:1px;top:12.73px;font-size:14.5px;line-height:14.5px">6</div></div>
<div class="r" style="left:98px;top:794px;width:1021px;height:29px;overflow:hidden"><div class="t" style="left:1px;top:12.73px;font-size:14.5px;line-height:14.5px">85.00</div></div>
<div class="r" style="left:293px;top:794px;width:826px;height:29px;overflow:hidden"><div class="t" style="left:1px;top:12.73px;font-size:14.5px;line-height:14.5px">10</div></div>
<div class="r" style="left:488px;top:794px;width:631px;height:29px;overflow:hidden"><div class="t" style="left:1px;top:12.73px;font-size:14.5px;line-height:14.5px">XLarge</div></div>
<svg class="r" style="left:489px;top:820px;overflow:hidden;" width="44" height="3" viewBox="0 0 44 3"><polyline points="0,2.5 1,2.5 3,0.5 5,0.5 7,2.5 9,2.5 11,0.5 13,0.5 15,2.5 17,2.5 19,0.5 21,0.5 23,2.5 25,2.5 27,0.5 29,0.5 31,2.5 33,2.5 35,0.5 37,0.5 39,2.5 41,2.5 43,0.5 45,0.5 47,2.5" fill="none" stroke="#ff0000" stroke-width="1.1"/></svg>
<div class="r" style="left:553px;top:794px;width:566px;height:29px;overflow:hidden"><div class="t" style="left:1px;top:12.73px;font-size:14.5px;line-height:14.5px">Black/Volcano</div></div>
<div class="r" style="left:943px;top:794px;width:176px;height:29px;overflow:hidden"><div class="t" style="left:1px;top:12.73px;font-size:14.5px;line-height:14.5px">889212070151</div></div>
<div class="r" style="left:1073px;top:794px;width:46px;height:29px;overflow:hidden"><div class="t" style="left:1px;top:12.73px;font-size:14.5px;line-height:14.5px">7</div></div>
<div class="r" style="left:488px;top:824px;width:631px;height:29px;overflow:hidden"><div class="t" style="left:1px;top:12.73px;font-size:14.5px;line-height:14.5px">Size</div></div>
<div class="r" style="left:553px;top:824px;width:566px;height:29px;overflow:hidden"><div class="t" style="left:1px;top:12.73px;font-size:14.5px;line-height:14.5px">Color</div></div>
<svg class="r" style="left:554px;top:850px;overflow:hidden;" width="36" height="3" viewBox="0 0 36 3"><polyline points="0,2.5 1,2.5 3,0.5 5,0.5 7,2.5 9,2.5 11,0.5 13,0.5 15,2.5 17,2.5 19,0.5 21,0.5 23,2.5 25,2.5 27,0.5 29,0.5 31,2.5 33,2.5 35,0.5 37,0.5 39,2.5" fill="none" stroke="#ff0000" stroke-width="1.1"/></svg>
<div class="r" style="left:683px;top:824px;width:436px;height:29px;overflow:hidden"><div class="t" style="left:1px;top:12.73px;font-size:14.5px;line-height:14.5px">Gloves</div></div>
<div class="r" style="left:1008px;top:824px;width:111px;height:29px;overflow:hidden"><div class="t" style="left:1px;top:12.73px;font-size:14.5px;line-height:14.5px">spyder-jaxon-glove</div></div>
<svg class="r" style="left:1009px;top:850px;overflow:hidden;" width="110" height="3" viewBox="0 0 110 3"><polyline points="0,2.5 1,2.5 3,0.5 5,0.5 7,2.5 9,2.5 11,0.5 13,0.5 15,2.5 17,2.5 19,0.5 21,0.5 23,2.5 25,2.5 27,0.5 29,0.5 31,2.5 33,2.5 35,0.5 37,0.5 39,2.5 41,2.5 43,0.5 45,0.5 47,2.5 49,2.5 51,0.5 53,0.5 55,2.5 57,2.5 59,0.5 61,0.5 63,2.5 65,2.5 67,0.5 69,0.5 71,2.5 73,2.5 75,0.5 77,0.5 79,2.5 81,2.5 83,0.5 85,0.5 87,2.5 89,2.5 91,0.5 93,0.5 95,2.5 97,2.5 99,0.5 101,0.5 103,2.5 105,2.5 107,0.5 109,0.5 111,2.5" fill="none" stroke="#ff0000" stroke-width="1.1"/></svg>
<div class="r" style="left:98px;top:854px;width:1021px;height:29px;overflow:hidden"><div class="t" style="left:1px;top:12.73px;font-size:14.5px;line-height:14.5px">65.00</div></div>
<div class="r" style="left:293px;top:854px;width:826px;height:29px;overflow:hidden"><div class="t" style="left:1px;top:12.73px;font-size:14.5px;line-height:14.5px">10</div></div>
<div class="r" style="left:488px;top:854px;width:631px;height:29px;overflow:hidden"><div class="t" style="left:1px;top:12.73px;font-size:14.5px;line-height:14.5px">Large</div></div>
<div class="r" style="left:553px;top:854px;width:566px;height:29px;overflow:hidden"><div class="t" style="left:1px;top:12.73px;font-size:14.5px;line-height:14.5px">Black</div></div>
<div class="r" style="left:943px;top:854px;width:176px;height:29px;overflow:hidden"><div class="t" style="left:1px;top:12.73px;font-size:14.5px;line-height:14.5px">889212070793</div></div>
<div class="r" style="left:1073px;top:854px;width:46px;height:29px;overflow:hidden"><div class="t" style="left:1px;top:12.73px;font-size:14.5px;line-height:14.5px">1</div></div>
<div class="r" style="left:488px;top:884px;width:631px;height:29px;overflow:hidden"><div class="t" style="left:1px;top:12.73px;font-size:14.5px;line-height:14.5px">Size</div></div>
<div class="r" style="left:553px;top:884px;width:566px;height:29px;overflow:hidden"><div class="t" style="left:1px;top:12.73px;font-size:14.5px;line-height:14.5px">Color</div></div>
<svg class="r" style="left:554px;top:910px;overflow:hidden;" width="36" height="3" viewBox="0 0 36 3"><polyline points="0,2.5 1,2.5 3,0.5 5,0.5 7,2.5 9,2.5 11,0.5 13,0.5 15,2.5 17,2.5 19,0.5 21,0.5 23,2.5 25,2.5 27,0.5 29,0.5 31,2.5 33,2.5 35,0.5 37,0.5 39,2.5" fill="none" stroke="#ff0000" stroke-width="1.1"/></svg>
<div class="r" style="left:683px;top:884px;width:436px;height:29px;overflow:hidden"><div class="t" style="left:1px;top:12.73px;font-size:14.5px;line-height:14.5px">Gloves</div></div>
<div class="r" style="left:1008px;top:884px;width:111px;height:29px;overflow:hidden"><div class="t" style="left:1px;top:12.73px;font-size:14.5px;line-height:14.5px">spyder-t-hot-conduct-liner</div></div>
<svg class="r" style="left:1009px;top:910px;overflow:hidden;" width="110" height="3" viewBox="0 0 110 3"><polyline points="0,2.5 1,2.5 3,0.5 5,0.5 7,2.5 9,2.5 11,0.5 13,0.5 15,2.5 17,2.5 19,0.5 21,0.5 23,2.5 25,2.5 27,0.5 29,0.5 31,2.5 33,2.5 35,0.5 37,0.5 39,2.5 41,2.5 43,0.5 45,0.5 47,2.5 49,2.5 51,0.5 53,0.5 55,2.5 57,2.5 59,0.5 61,0.5 63,2.5 65,2.5 67,0.5 69,0.5 71,2.5 73,2.5 75,0.5 77,0.5 79,2.5 81,2.5 83,0.5 85,0.5 87,2.5 89,2.5 91,0.5 93,0.5 95,2.5 97,2.5 99,0.5 101,0.5 103,2.5 105,2.5 107,0.5 109,0.5 111,2.5" fill="none" stroke="#ff0000" stroke-width="1.1"/></svg>
<div class="r" style="left:98px;top:914px;width:1021px;height:29px;overflow:hidden"><div class="t" style="left:1px;top:12.73px;font-size:14.5px;line-height:14.5px">25.00</div></div>
<div class="r" style="left:293px;top:914px;width:826px;height:29px;overflow:hidden"><div class="t" style="left:1px;top:12.73px;font-size:14.5px;line-height:14.5px">10</div></div>
<div class="r" style="left:488px;top:914px;width:631px;height:29px;overflow:hidden"><div class="t" style="left:1px;top:12.73px;font-size:14.5px;line-height:14.5px">Small</div></div>
<div class="r" style="left:553px;top:914px;width:566px;height:29px;overflow:hidden"><div class="t" style="left:1px;top:12.73px;font-size:14.5px;line-height:14.5px">Black/Polar</div></div>
<div class="r" style="left:943px;top:914px;width:176px;height:29px;overflow:hidden"><div class="t" style="left:1px;top:12.73px;font-size:14.5px;line-height:14.5px">889212071233</div></div>
<div class="r" style="left:1073px;top:914px;width:46px;height:29px;overflow:hidden"><div class="t" style="left:1px;top:12.73px;font-size:14.5px;line-height:14.5px">1</div></div>
<div class="r" style="left:98px;top:944px;width:1021px;height:29px;overflow:hidden"><div class="t" style="left:1px;top:12.73px;font-size:14.5px;line-height:14.5px">25.00</div></div>
<div class="r" style="left:293px;top:944px;width:826px;height:29px;overflow:hidden"><div class="t" style="left:1px;top:12.73px;font-size:14.5px;line-height:14.5px">10</div></div>
<div class="r" style="left:488px;top:944px;width:631px;height:29px;overflow:hidden"><div class="t" style="left:1px;top:12.73px;font-size:14.5px;line-height:14.5px">Medium</div></div>
<div class="r" style="left:553px;top:944px;width:566px;height:29px;overflow:hidden"><div class="t" style="left:1px;top:12.73px;font-size:14.5px;line-height:14.5px">Black/Polar</div></div>
<div class="r" style="left:943px;top:944px;width:176px;height:29px;overflow:hidden"><div class="t" style="left:1px;top:12.73px;font-size:14.5px;line-height:14.5px">889212071240</div></div>
<div class="r" style="left:1073px;top:944px;width:46px;height:29px;overflow:hidden"><div class="t" style="left:1px;top:12.73px;font-size:14.5px;line-height:14.5px">2</div></div>
<div class="r" style="left:96px;top:372px;width:68px;height:3px;background:#000"></div>
<div class="r" style="left:96px;top:401px;width:68px;height:3px;background:#000"></div>
<div class="r" style="left:96px;top:372px;width:3px;height:32px;background:#000"></div>
<div class="r" style="left:161px;top:372px;width:3px;height:32px;background:#000"></div>
<div class="r" style="left:161px;top:401px;width:6px;height:6px;background:#000"></div>
<div class="r" style="left:0px;top:964px;width:1137px;height:33px;background:#f0f0f0"></div>
<div class="r" style="left:194px;top:964px;width:773px;height:1px;background:#a0a0a0"></div>
<div class="r" style="left:1px;top:965px;width:15px;height:15px;background:#c8c8c8"></div>
<div class="r" style="left:18px;top:965px;width:15px;height:15px;background:#c8c8c8"></div>
<div class="r" style="left:35px;top:965px;width:15px;height:15px;background:#c8c8c8"></div>
<div class="r" style="left:52px;top:965px;width:15px;height:15px;background:#c8c8c8"></div>
<svg class="r" style="left:1px;top:965px;" width="66" height="15" viewBox="0 0 66 15"><path d="M5 4v7" stroke="#fff" stroke-width="1.2"/><path d="M4.5 4v7" stroke="#a8a8a8" stroke-width="1"/><path d="M11 3.5L6 7.5 11 11.5z" fill="#a8a8a8"/><path d="M28 3.5L23 7.5 28 11.5z" fill="#a8a8a8"/><path d="M28.5 4v8" stroke="#fff" stroke-width="1"/><path d="M39 3.5L44 7.5 39 11.5z" fill="#a8a8a8"/><path d="M39 12l5-4" stroke="#fff" stroke-width="1"/><path d="M55 3.5L60 7.5 55 11.5z" fill="#a8a8a8"/><path d="M61.5 4v7" stroke="#a8a8a8" stroke-width="1"/><path d="M62.5 4v7" stroke="#fff" stroke-width="1"/><path d="M55 12l5-4" stroke="#fff" stroke-width="1"/></svg>
<svg class="r" style="left:68px;top:963px;" width="128" height="19" viewBox="0 0 128 19"><path d="M1 1L7.5 17.5H120L126 1z" fill="#fff"/><path d="M1 1L7.5 17.5H120L126 1" fill="none" stroke="#3a3a3a" stroke-width="1"/></svg>
<div class="t " style="left:77.5px;top:966.84px;font-size:12px;line-height:12px;font-weight:bold;letter-spacing:-0.1px">holestengineering2</div>
<div class="r" style="left:967px;top:964px;width:8px;height:17px;box-sizing:border-box;background:#fff;border:1px solid #909090"></div>
<svg class="r" style="left:977px;top:966px;" width="10" height="13" viewBox="0 0 10 13"><path d="M7 2.5L3 6.5 7 10.5" fill="none" stroke="#606060" stroke-width="1.3"/></svg>
<div class="r" style="left:996px;top:965px;width:32px;height:15px;background:#cdcdcd"></div>
<svg class="r" style="left:1103px;top:966px;" width="10" height="13" viewBox="0 0 10 13"><path d="M3 2.5L7 6.5 3 10.5" fill="none" stroke="#606060" stroke-width="1.3"/></svg>
<div class="r" style="left:1116px;top:964px;width:3px;height:17px;background:#000"></div>
<div class="r" style="left:1119px;top:149px;width:17px;height:815px;background:#f0f0f0"></div>
<svg class="r" style="left:1121px;top:152px;" width="13" height="10" viewBox="0 0 13 10"><path d="M3.2 8L6.8 4.4 10.4 8" fill="none" stroke="#555" stroke-width="1.7"/></svg>
<div class="r" style="left:1120px;top:166px;width:15px;height:21px;background:#cdcdcd"></div>
<svg class="r" style="left:1121px;top:950px;" width="13" height="10" viewBox="0 0 13 10"><path d="M3.2 3.5L6.8 7.1 10.4 3.5" fill="none" stroke="#555" stroke-width="1.7"/></svg>
<div class="r" style="left:1119px;top:981px;width:18px;height:1px;background:#d8d8d8"></div>
<div class="r" style="left:0px;top:981px;width:1146px;height:2px;background:#fafafa"></div>
<div class="r" style="left:0px;top:983px;width:1146px;height:14px;background:#f0f0f0"></div>
<div class="r" style="left:336px;top:986px;width:1px;height:11px;background:#a0a0a0"></div>
<div class="r" style="left:774px;top:986px;width:1px;height:11px;background:#a0a0a0"></div>
<div class="r" style="left:826px;top:986px;width:1px;height:11px;background:#a0a0a0"></div>
<div class="r" style="left:860px;top:986px;width:1px;height:11px;background:#a0a0a0"></div>
<div class="r" style="left:875px;top:986px;width:1px;height:11px;background:#a0a0a0"></div>
<div class="r" style="left:904px;top:986px;width:1px;height:11px;background:#a0a0a0"></div>
<div class="t " style="left:8.5px;top:988.34px;font-size:12px;line-height:12px;">Sheet 1 / 1</div>
<div class="t " style="left:342.5px;top:988.68px;font-size:11.6px;line-height:11.6px;">PageStyle_holestengineering2</div>
<div class="t " style="left:831px;top:988.34px;font-size:12px;line-height:12px;">STD</div>
<div class="t " style="left:863.5px;top:988.34px;font-size:12px;line-height:12px;">*</div>
<div class="t " style="left:1042px;top:988.34px;font-size:12px;line-height:12px;">Sum=0</div>
</body></html>
